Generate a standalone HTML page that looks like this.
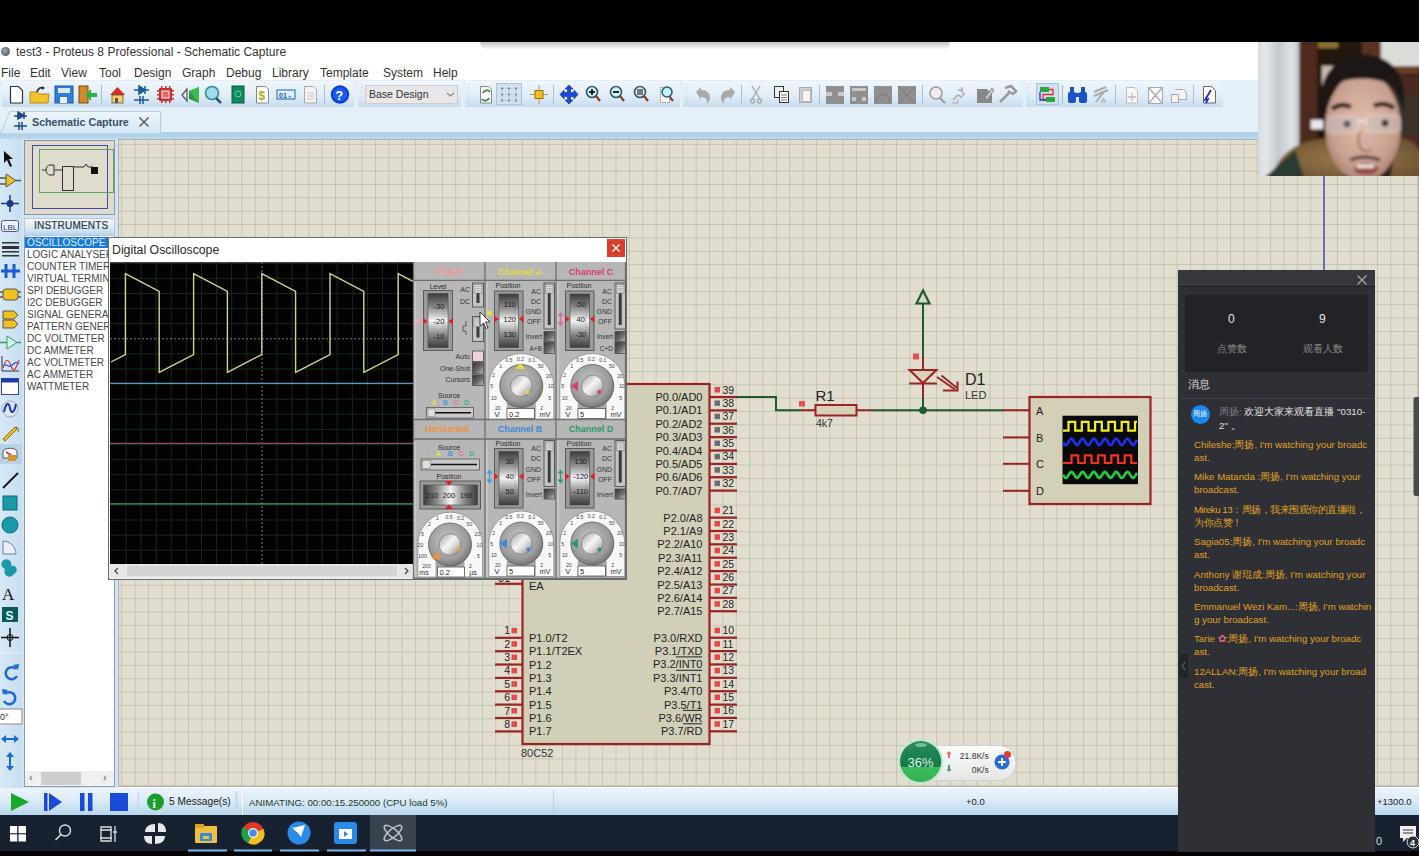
<!DOCTYPE html>
<html><head><meta charset="utf-8">
<style>
*{margin:0;padding:0;box-sizing:border-box}
html,body{width:1419px;height:856px;overflow:hidden;background:#fff;font-family:"Liberation Sans",sans-serif;position:relative}
.a{position:absolute}
.t{position:absolute;white-space:nowrap;line-height:1}
</style></head><body>
<!-- top black bar -->
<div class="a" style="left:0;top:0;width:1419px;height:42px;background:#000"></div>
<div class="a" style="left:480px;top:42px;width:470px;height:8px;background:linear-gradient(#9a9a9a,rgba(255,255,255,0));border-radius:0 0 40px 40px;opacity:.6"></div>

<!-- title -->
<div class="a" style="left:1px;top:47px;width:9px;height:9px;border-radius:50%;background:radial-gradient(circle at 40% 40%,#9aa,#445)"></div>
<div class="t" id="title" style="left:16px;top:46px;font-size:12px;color:#333">test3 - Proteus 8 Professional - Schematic Capture</div>

<!-- menu -->
<div class="t" style="left:1px;top:66.7px;font-size:12px;color:#333">File</div>
<div class="t" style="left:30px;top:66.7px;font-size:12px;color:#333">Edit</div>
<div class="t" style="left:61px;top:66.7px;font-size:12px;color:#333">View</div>
<div class="t" style="left:99px;top:66.7px;font-size:12px;color:#333">Tool</div>
<div class="t" style="left:134px;top:66.7px;font-size:12px;color:#333">Design</div>
<div class="t" style="left:182px;top:66.7px;font-size:12px;color:#333">Graph</div>
<div class="t" style="left:226px;top:66.7px;font-size:12px;color:#333">Debug</div>
<div class="t" style="left:272px;top:66.7px;font-size:12px;color:#333">Library</div>
<div class="t" style="left:320px;top:66.7px;font-size:12px;color:#333">Template</div>
<div class="t" style="left:383px;top:66.7px;font-size:12px;color:#333">System</div>
<div class="t" style="left:433px;top:66.7px;font-size:12px;color:#333">Help</div>

<!-- toolbar band + tab strip -->
<div class="a" style="left:0;top:80px;width:1258px;height:52px;background:#e5eff8"></div>
<div class="a" style="left:0;top:132px;width:1258px;height:7px;background:linear-gradient(#a9cde8,#bcd8ec)"></div>
<svg class="a" style="left:0;top:0" width="1258" height="140" viewBox="0 0 1258 140">
<defs>
<linearGradient id="grp" x1="0" y1="0" x2="0" y2="1"><stop offset="0" stop-color="#f0f6fb"/><stop offset=".6" stop-color="#dfecf7"/><stop offset="1" stop-color="#c6dcee"/></linearGradient>
<linearGradient id="tabg" x1="0" y1="0" x2="0" y2="1"><stop offset="0" stop-color="#eef5fb"/><stop offset="1" stop-color="#d2e5f4"/></linearGradient>
</defs>
<!-- groups -->
<rect x="2" y="81" width="352" height="26" fill="url(#grp)"/>
<rect x="358" y="81" width="103" height="26" fill="url(#grp)"/>
<rect x="465" y="81" width="215" height="26" fill="url(#grp)"/>
<rect x="683" y="81" width="340" height="26" fill="url(#grp)"/>
<rect x="1026" y="81" width="197" height="26" fill="url(#grp)"/>
<g stroke="#b9cfe0" stroke-width="1" stroke-dasharray="1 2">
<line x1="361.5" y1="84" x2="361.5" y2="104"/><line x1="468.5" y1="84" x2="468.5" y2="104"/><line x1="686.5" y1="84" x2="686.5" y2="104"/><line x1="1028.5" y1="84" x2="1028.5" y2="104"/>
</g>
<g stroke="#a9bfd2" stroke-width="1">
<line x1="101.5" y1="85" x2="101.5" y2="104"/><line x1="324.5" y1="85" x2="324.5" y2="104"/><line x1="553.5" y1="85" x2="553.5" y2="104"/>
<line x1="741.5" y1="85" x2="741.5" y2="104"/><line x1="819.5" y1="85" x2="819.5" y2="104"/><line x1="922.5" y1="85" x2="922.5" y2="104"/>
<line x1="1062.5" y1="85" x2="1062.5" y2="104"/><line x1="1115.5" y1="85" x2="1115.5" y2="104"/><line x1="1193.5" y1="85" x2="1193.5" y2="104"/>
</g>
<!-- 1 new -->
<path d="M10.5 86.5h8l4 4v12.5h-12z" fill="#fff" stroke="#333" stroke-width="1.2"/>
<!-- 2 open -->
<path d="M30 92h7l2 2h10l-1 9h-18z" fill="#f2c230" stroke="#b88a10" stroke-width="1"/>
<path d="M37 92c1-4 4-5 7-4" fill="none" stroke="#333" stroke-width="1.8"/><path d="M42 86l3 2-3 2z" fill="#333"/>
<!-- 3 save -->
<rect x="55" y="86" width="18" height="17" fill="#2f7fd8" stroke="#1a5aa8"/><rect x="58" y="88" width="12" height="5" fill="#dbe9f7"/><rect x="60" y="97" width="7" height="6" fill="#eef"/>
<!-- 4 import -->
<rect x="79" y="86" width="9" height="17" fill="#d08a2a" stroke="#7a4a10"/><path d="M97 93h-6v-4l-6 6 6 6v-4h6z" fill="#2fb040"/>
<!-- 6 home -->
<path d="M110 95l7.5-8 7.5 8z" fill="#d83020"/><rect x="112" y="95" width="11" height="8" fill="#f5d060" stroke="#555" stroke-width=".8"/><rect x="115" y="98" width="3" height="5" fill="#555"/>
<!-- 7 schematic -->
<g stroke="#1a5a9a" stroke-width="1.5" fill="#1a5a9a"><line x1="134" y1="90" x2="149" y2="90"/><path d="M139 86v8l6-4z"/><line x1="145" y1="86" x2="145" y2="94"/><line x1="134" y1="100" x2="149" y2="100"/><line x1="140" y1="96" x2="140" y2="104"/><line x1="143" y1="96" x2="143" y2="104"/></g>
<!-- 8 chip -->
<g fill="#c83030"><rect x="159" y="88" width="13" height="13" rx="1"/><rect x="157" y="90" width="17" height="1.5"/><rect x="157" y="94" width="17" height="1.5"/><rect x="157" y="98" width="17" height="1.5"/><rect x="161" y="86" width="1.5" height="17"/><rect x="165" y="86" width="1.5" height="17"/><rect x="169" y="86" width="1.5" height="17"/></g><rect x="162" y="91" width="7" height="7" fill="#f06060" stroke="#fff" stroke-width="1"/>
<!-- 9 sound -->
<path d="M182 95l5-6v12z" fill="none" stroke="#556" stroke-width="1.2"/><path d="M189 91l10-4v16l-10-4z" fill="#2a9a40"/><path d="M189 91l10-4v16z" fill="#3fba50"/>
<!-- 10 magnifier -->
<circle cx="212" cy="93" r="6.5" fill="#9fe0e8" stroke="#2a8a9a" stroke-width="1.5"/><line x1="216" y1="98" x2="221" y2="103" stroke="#2a5a6a" stroke-width="2.5"/>
<!-- 11 green book -->
<rect x="232" y="86" width="12" height="17" fill="#108a5a" stroke="#0a5a3a"/><circle cx="238" cy="94" r="3" fill="none" stroke="#5cd0a0"/>
<!-- 12 $ doc -->
<path d="M256.5 86.5h9l3 3v13.5h-12z" fill="#fff" stroke="#888"/><text x="258.5" y="100" font-size="12" font-weight="bold" fill="#b8a820" font-family="Liberation Sans">$</text>
<!-- 13 01 -->
<rect x="277" y="90" width="18" height="9" fill="#dfefff" stroke="#3a7ac0" stroke-width="1.2"/><text x="279" y="97.5" font-size="7" font-weight="bold" fill="#2a5aa0" font-family="Liberation Sans">01</text><text x="288" y="97.5" font-size="6" fill="#2a5aa0" font-family="Liberation Sans">»</text>
<!-- 14 gray doc -->
<path d="M304.5 86.5h9l3 3v13.5h-12z" fill="#f4f4f4" stroke="#aaa"/><g stroke="#c8c0c0"><line x1="307" y1="93" x2="314" y2="93"/><line x1="307" y1="96" x2="314" y2="96"/><line x1="307" y1="99" x2="314" y2="99"/></g>
<!-- 16 help -->
<circle cx="340" cy="94.5" r="9.2" fill="#0a3ad8"/><circle cx="340" cy="94.5" r="7.2" fill="#1a5af0"/><text x="335.2" y="100" font-size="13" font-weight="bold" fill="#fff" font-family="Liberation Sans">?</text>
<!-- dropdown -->
<rect x="365.5" y="85.5" width="92" height="18" fill="#e9e7ea" stroke="#c7cdd3"/>
<path d="M447 93l3.5 3 3.5-3" fill="none" stroke="#888" stroke-width="1.2"/>
<!-- group 3 -->
<path d="M480.5 86.5h8l3 3v13.5h-11z" fill="#fff" stroke="#888"/><path d="M483 93a4 4 0 0 1 7-1M489 98a4 4 0 0 1-7 1" fill="none" stroke="#2a9a40" stroke-width="2"/>
<rect x="496.5" y="83.5" width="25" height="21" fill="#cfe0ef" stroke="#a9c4dc"/>
<g fill="#555"><circle cx="502" cy="88.5" r="1"/><circle cx="509" cy="88.5" r="1"/><circle cx="516" cy="88.5" r="1"/><circle cx="502" cy="94.5" r="1"/><circle cx="509" cy="94.5" r="1"/><circle cx="516" cy="94.5" r="1"/><circle cx="502" cy="100.5" r="1"/><circle cx="509" cy="100.5" r="1"/><circle cx="516" cy="100.5" r="1"/></g>
<g stroke="#aab" stroke-width=".6" stroke-dasharray="1 1"><line x1="502" y1="88" x2="502" y2="101"/><line x1="509" y1="88" x2="509" y2="101"/><line x1="516" y1="88" x2="516" y2="101"/><line x1="501" y1="94.5" x2="517" y2="94.5"/><line x1="501" y1="88.5" x2="517" y2="88.5"/><line x1="501" y1="100.5" x2="517" y2="100.5"/></g>
<line x1="539" y1="85" x2="539" y2="104" stroke="#999" stroke-width="1"/><line x1="530" y1="94.5" x2="548" y2="94.5" stroke="#999" stroke-width="1"/><rect x="535" y="90.5" width="8" height="8" fill="#f0c020" stroke="#a07000"/>
<path d="M569 85l4 4h-2.5v3.5h3.5V90l4 4.5-4 4.5v-2.5h-3.5v3.5h2.5l-4 4-4-4h2.5v-3.5h-3.5v2.5l-4-4.5 4-4.5v2.5h3.5V89h-2.5z" fill="#1a4ad8" stroke="#0a2a90" stroke-width=".6"/>
<g fill="#d8f0f4" stroke="#2a5a6a" stroke-width="1.6"><circle cx="592" cy="92" r="5.5"/><circle cx="616" cy="92" r="5.5"/><circle cx="640" cy="92" r="5.5"/></g>
<g stroke="#8a3a20" stroke-width="2.2"><line x1="596" y1="96" x2="600" y2="101"/><line x1="620" y1="96" x2="624" y2="101"/><line x1="644" y1="96" x2="648" y2="101"/><line x1="669" y1="96" x2="673" y2="101"/></g>
<g stroke="#111" stroke-width="1.8"><line x1="589" y1="92" x2="595" y2="92"/><line x1="592" y1="89" x2="592" y2="95"/><line x1="613" y1="92" x2="619" y2="92"/></g>
<rect x="637" y="89" width="6" height="6" fill="#777"/>
<rect x="660.5" y="87.5" width="9" height="15" fill="#fff" stroke="#888" stroke-dasharray="1.5 1"/><circle cx="667" cy="92" r="5" fill="#bff0f4" stroke="#2a5a6a" stroke-width="1.5"/>
<!-- group 4 gray -->
<g fill="#a9a9a9">
<path d="M696 92l5-5v3c6 0 9 3 9 8 0 3-2 5-3 6 1-4-1-7-6-7v3z"/>
<path d="M735 92l-5-5v3c-6 0-9 3-9 8 0 3 2 5 3 6-1-4 1-7 6-7v3z"/>
</g>
<g stroke="#aaa" stroke-width="1.3" fill="none"><line x1="752" y1="86" x2="760" y2="99"/><line x1="760" y1="86" x2="752" y2="99"/><circle cx="752.5" cy="101" r="2"/><circle cx="759.5" cy="101" r="2"/></g>
<rect x="774.5" y="86.5" width="9" height="11" fill="#eee" stroke="#333"/><rect x="779.5" y="91.5" width="9" height="11" fill="#fff" stroke="#333"/><g stroke="#555" stroke-width=".8"><line x1="781" y1="95" x2="787" y2="95"/><line x1="781" y1="97.5" x2="787" y2="97.5"/><line x1="781" y1="100" x2="787" y2="100"/></g>
<rect x="799.5" y="87.5" width="12" height="15" fill="#ccc" stroke="#aaa"/><rect x="802.5" y="90.5" width="8" height="11" fill="#f4f4f4" stroke="#bbb"/>
<g fill="#8f8f8f"><rect x="826" y="86" width="18" height="18"/><rect x="850" y="86" width="18" height="18"/><rect x="874" y="86" width="18" height="18"/><rect x="898" y="86" width="18" height="18"/></g>
<g fill="#c8c8c8"><rect x="826" y="92" width="6" height="4"/><rect x="838" y="92" width="6" height="4"/><rect x="852" y="88" width="14" height="3"/><rect x="852" y="97" width="4" height="4"/><rect x="862" y="97" width="4" height="4"/></g>
<path d="M876 102c0-10 14-10 14 0" fill="none" stroke="#777" stroke-width="1"/><path d="M898 86l18 18M916 86l-18 18" stroke="#777" stroke-width="1"/>
<circle cx="936" cy="93" r="6" fill="#eee" stroke="#999" stroke-width="1.5"/><line x1="940" y1="98" x2="945" y2="103" stroke="#999" stroke-width="2"/>
<path d="M953 100l5-5 3 2 4-4M958 90h5M962 87v6" fill="none" stroke="#aaa" stroke-width="1.5"/><path d="M952 103h6v-4" fill="#ddd" stroke="#aaa"/>
<path d="M977 103v-14h10l5 5v9z" fill="#888"/><path d="M985 98l7-10 2 2-7 10z" fill="#ccc" stroke="#888"/>
<path d="M1000 102l9-9M1005 88l6-2 5 5-3 3-5-3" fill="none" stroke="#999" stroke-width="2.5"/>
<!-- group 5 -->
<rect x="1036.5" y="83.5" width="22" height="21" fill="#cfe0ef" stroke="#a9c4dc"/>
<rect x="1040" y="87" width="9" height="5" fill="#2aa840"/><rect x="1046" y="97" width="9" height="5" fill="#2aa840"/>
<path d="M1049 89.5h4v5h-10v5h3" fill="none" stroke="#d83030" stroke-width="1.3"/><path d="M1040 92v8h6" fill="none" stroke="#3030c8" stroke-width="1.3"/>
<g fill="#1a50c8"><rect x="1068" y="92" width="8" height="11" rx="2"/><rect x="1079" y="92" width="8" height="11" rx="2"/><rect x="1070" y="87" width="4" height="6"/><rect x="1081" y="87" width="4" height="6"/><rect x="1075" y="93" width="5" height="4"/></g>
<path d="M1094 92l12-5M1094 96l14-6M1096 102l8-10" stroke="#aaa" stroke-width="2" fill="none"/><text x="1101" y="103" font-size="7" fill="#999" font-family="Liberation Sans">A</text>
<path d="M1126.5 87.5h8l3 3v12.5h-11z" fill="#f8f8f8" stroke="#bbb"/><path d="M1132 93v8M1128 97h8" stroke="#bbb" stroke-width="1.3"/>
<path d="M1148.5 87.5h14v16h-14z" fill="#f8f8f8" stroke="#aaa"/><path d="M1148 87l15 17M1163 87l-15 17" stroke="#aaa" stroke-width="1.3"/>
<path d="M1171.5 94.5h7v8h-7zM1175.5 89.5h8l3 3v7h-8" fill="#f4f4f4" stroke="#aaa"/>
<path d="M1203.5 86.5h8l4 4v12.5h-12z" fill="#fff" stroke="#666"/><path d="M1211 90l-6 10 3-1-2 4" fill="none" stroke="#2a2ac0" stroke-width="1.8"/>
<!-- tab -->
<path d="M0 134 L10 111.5 H160.5 V134 Z" fill="url(#tabg)" stroke="#b3cde2" stroke-width="1"/>
<g stroke="#1a4a8a" stroke-width="1.5" fill="#1a4a8a"><line x1="14" y1="116" x2="27" y2="116"/><path d="M18 112v7l6-3.5z"/><line x1="24" y1="112" x2="24" y2="119"/><line x1="14" y1="126" x2="27" y2="126"/><line x1="19" y1="122" x2="19" y2="130"/><line x1="22" y1="122" x2="22" y2="130"/></g>
<path d="M139.5 117.5l9 9M148.5 117.5l-9 9" stroke="#555" stroke-width="1.4"/>
</svg>
<div class="t" style="left:369px;top:89px;font-size:10.5px;color:#333">Base Design</div>
<div class="t" style="left:32px;top:117px;font-size:10.7px;font-weight:bold;color:#3b5068">Schematic Capture</div>

<!--TOOLBAR-->

<!-- left toolbar -->
<div class="a" style="left:0;top:139px;width:22px;height:650px;background:linear-gradient(90deg,#d6e8f6,#c8def0)"></div>
<div class="a" style="left:22px;top:139px;width:96px;height:650px;background:#d2e5f4"></div>

<!-- canvas -->
<div class="a" id="canvas" style="left:118px;top:139px;width:1301px;height:648px;border:1px solid #a9b4b8;background-color:#e1ded0;
background-image:linear-gradient(90deg,rgba(150,145,120,.34) 1px,transparent 1px),linear-gradient(rgba(150,145,120,.34) 1px,transparent 1px);
background-size:13.37px 13.37px;background-position:-118px -129.7px"></div>

<!-- status bar -->
<div class="a" style="left:0;top:788px;width:1419px;height:27px;background:linear-gradient(#eef3fb,#d8eaf6 50%,#b8d6ec)"></div>
<!-- taskbar -->
<div class="a" style="left:0;top:815px;width:1419px;height:36px;background:#172130"></div>
<div class="a" style="left:0;top:851px;width:1419px;height:5px;background:#000"></div>

<!-- left vertical toolbar icons -->
<svg class="a" style="left:0;top:139px" width="24" height="650" viewBox="0 139 24 650">
<path d="M4 151l9 8h-4l3 7-2 1-3-7-3 3z" fill="#111"/>
<path d="M6 174v13l10-6.5z" fill="#f0c020" stroke="#555" stroke-width="1"/><path d="M0 178h6M0 184h6M16 180.5h5" stroke="#555" stroke-width="1.3"/>
<path d="M10 195v17M1 203.5h18" stroke="#1a3a8a" stroke-width="1.5"/><circle cx="10" cy="203.5" r="3.5" fill="#1a3a8a"/>
<rect x="1.5" y="220.5" width="17" height="11" rx="2" fill="#eef" stroke="#4a5a8a"/><text x="3" y="229.5" font-size="8" fill="#2a3a6a" font-family="Liberation Sans">LBL</text>
<g fill="#333"><rect x="2" y="242" width="17" height="1.5"/><rect x="2" y="246" width="17" height="3"/><rect x="2" y="251" width="17" height="1.5"/><rect x="2" y="255" width="17" height="1.5"/></g>
<path d="M1 271h19M6 264v14M14 264v14" stroke="#1a5ad8" stroke-width="3"/>
<rect x="3" y="289" width="15" height="11" rx="3" fill="#f0c020" stroke="#555"/><path d="M0 292h3M0 297h3M18 292h3M18 297h3" stroke="#555" stroke-width="1.3"/>
<path d="M3 311h11l4 4-4 4H3z" fill="#f0c020" stroke="#555"/><path d="M3 320h11l4 4-4 4H3z" fill="#f0c020" stroke="#555"/>
<path d="M7 336v13l10-6.5z" fill="#cfe" stroke="#3a9a5a" stroke-width="1"/><path d="M0 342.5h7M17 342.5h4" stroke="#3a9a5a" stroke-width="1.3"/>
<path d="M2 356v15h17" fill="none" stroke="#333"/><path d="M3 368c3-10 5-10 8-2s5 2 8-6" fill="none" stroke="#d83030" stroke-width="1.2"/><path d="M3 366c3-4 5 2 8 0s5-6 8-2" fill="none" stroke="#2a5ad8" stroke-width="1.2"/>
<rect x="1.5" y="378.5" width="17" height="16" fill="#fff" stroke="#3a4a7a"/><rect x="1.5" y="378.5" width="17" height="4" fill="#1a3ab0"/>
<circle cx="10" cy="409" r="8" fill="#dfe6f0" stroke="#aab"/><path d="M4 412c2-10 5-10 6-4s4 6 6-4" fill="none" stroke="#1a3ab8" stroke-width="2"/>
<path d="M3 439l12-12 2 2-12 12z" fill="#f0c020" stroke="#8a6a10"/><path d="M15 428c3-2 4 1 3 4" fill="none" stroke="#8a6a10"/>
<rect x="0" y="444" width="22" height="20" fill="#b8d2e8"/><path d="M3 458v-6c0-5 14-5 14 0v6z" fill="#fff" stroke="#555"/><path d="M6 452l5 3" stroke="#d83030" stroke-width="1.5"/><rect x="8" y="455" width="8" height="6" fill="#d89030"/>
<path d="M3 488l15-15" stroke="#111" stroke-width="1.8"/>
<rect x="3" y="496" width="14" height="14" fill="#1a9aa8" stroke="#0a6a78"/>
<circle cx="10" cy="525" r="8" fill="#1a9aa8" stroke="#0a6a78"/>
<path d="M3 541v13h13c0-7-6-13-13-13z" fill="#eef0f8" stroke="#6a7aa8"/>
<path d="M5 569a5 5 0 1 1 6-3a4 4 0 1 1 3 8a5 5 0 0 1-9-5z" fill="#1a9aa8"/>
<text x="2" y="600" font-size="17" fill="#111" font-family="Liberation Serif">A</text>
<rect x="2" y="607" width="16" height="15" fill="#0a5a5a"/><text x="5.5" y="619.5" font-size="12" font-weight="bold" fill="#dff" font-family="Liberation Sans">S</text>
<path d="M10 628v19M1 637.5h18" stroke="#111" stroke-width="1.5"/><circle cx="10" cy="637.5" r="3" fill="none" stroke="#111"/>
<line x1="0" y1="653" x2="22" y2="653" stroke="#fff" stroke-dasharray="1 1"/>
<path d="M16 669a6 6 0 1 0 1 7" fill="none" stroke="#1a6ad8" stroke-width="2.5"/><path d="M13 665l5 5 1-6z" fill="#1a6ad8"/>
<path d="M5 694a6 6 0 1 1-1 7" fill="none" stroke="#1a6ad8" stroke-width="2.5"/><path d="M8 690l-5 5-1-6z" fill="#1a6ad8"/>
<rect x="-1" y="709" width="23" height="15" fill="#fff" stroke="#888"/><text x="0" y="720" font-size="9" fill="#333" font-family="Liberation Sans">0°</text>
<path d="M1 739l5-4v3h8v-3l5 4-5 4v-3H6v3z" fill="#1a6ad8"/>
<path d="M10 752l4 5h-3v9h3l-4 5-4-5h3v-9H6z" fill="#1a6ad8"/>
</svg>
<!-- left panel -->
<div class="a" style="left:24px;top:140px;width:91px;height:75px;background:#dfdccd;border:1px solid #8a96a0"></div>
<div class="a" style="left:32px;top:145px;width:76px;height:64px;border:1.5px solid #4848a8"></div>
<div class="a" style="left:39px;top:149px;width:75px;height:44px;border:1.5px solid #58a858"></div>
<svg class="a" style="left:24px;top:140px" width="91" height="75" viewBox="24 140 91 75">
<path d="M42 170h4M46 170c0-3 2-5 4-5h4v10h-4c-2 0-4-2-4-5M54 170h8" fill="none" stroke="#333" stroke-width="1"/>
<rect x="62.5" y="166.5" width="11" height="24" fill="none" stroke="#333" stroke-width="1"/>
<path d="M74 167h10l2-3 2 3h5" fill="none" stroke="#333" stroke-width="1"/>
<rect x="91" y="167" width="7" height="7" fill="#111"/>
</svg>
<div class="a" style="left:24px;top:218px;width:91px;height:18px;background:linear-gradient(#f4f8fc,#dce9f4 55%,#b4d4ee);border:1px solid #b8c8d8"></div>
<div class="t" style="left:34px;top:221px;font-size:10px;color:#2e3844;letter-spacing:.2px;-webkit-text-stroke:.2px #2e3844">INSTRUMENTS</div>
<div class="a" style="left:24px;top:236px;width:91px;height:551px;background:#fff;border:1px solid #8a9cae;border-top:none"></div>
<div class="a" style="left:25px;top:237px;width:83px;height:11px;background:#1a7ad8"></div>
<div class="a" id="instlist" style="left:27px;top:237px;font-size:10px;line-height:12px;color:#484848;width:84px;overflow:hidden;white-space:nowrap">
<div style="color:#dff0ff">OSCILLOSCOPE</div><div>LOGIC ANALYSER</div><div>COUNTER TIMER</div><div>VIRTUAL TERMINAL</div><div>SPI DEBUGGER</div><div>I2C DEBUGGER</div><div>SIGNAL GENERATOR</div><div>PATTERN GENERATOR</div><div>DC VOLTMETER</div><div>DC AMMETER</div><div>AC VOLTMETER</div><div>AC AMMETER</div><div>WATTMETER</div>
</div>
<div class="a" style="left:25px;top:771px;width:89px;height:15px;background:#f0f0f0"></div>
<div class="a" style="left:41px;top:772px;width:40px;height:13px;background:#cdcdcd"></div>
<div class="t" style="left:29px;top:772px;font-size:11px;color:#555">&lsaquo;</div>
<div class="t" style="left:103px;top:772px;font-size:11px;color:#555">&rsaquo;</div>

<!--LEFT-->
<!-- status bar icons -->
<svg class="a" style="left:0;top:788px" width="1419" height="68" viewBox="0 788 1419 68">
<path d="M11 793v18l18-9z" fill="#1aa82a"/>
<rect x="44" y="793" width="3.5" height="18" fill="#1a4ad8"/><path d="M49 793v18l13-9z" fill="#1a4ad8"/>
<rect x="80" y="793" width="4.5" height="18" fill="#1a4ad8"/><rect x="88" y="793" width="4.5" height="18" fill="#1a4ad8"/>
<rect x="110" y="793" width="18" height="18" fill="#1a4ad8"/>
<line x1="138.5" y1="791" x2="138.5" y2="813" stroke="#c8d8e8"/>
<circle cx="155.5" cy="802" r="8.5" fill="#1aa02a"/><text x="152.5" y="807.5" font-size="12" font-weight="bold" fill="#fff" font-family="Liberation Serif">i</text>
<line x1="236.5" y1="791" x2="236.5" y2="814" stroke="#c8d8e8" stroke-width="2"/><line x1="242.5" y1="791" x2="242.5" y2="814" stroke="#fff"/>
<line x1="553.5" y1="790" x2="553.5" y2="814" stroke="#bbb" stroke-dasharray="1 1"/>
<!-- taskbar -->
<g fill="#fff"><rect x="10" y="826" width="7.2" height="7.2"/><rect x="18.5" y="826" width="7.5" height="7.2"/><rect x="10" y="834.3" width="7.2" height="7.2"/><rect x="18.5" y="834.3" width="7.5" height="7.2"/></g>
<circle cx="65" cy="830.5" r="5.5" fill="none" stroke="#ddd" stroke-width="1.4"/><line x1="61" y1="834.5" x2="55.5" y2="840" stroke="#ddd" stroke-width="1.6"/>
<path d="M101 827h10v14h-10zM100 830h12M100 838h12M115 826v16M113 832h4" fill="none" stroke="#ddd" stroke-width="1.3"/>
<g fill="#e8e8e8"><path d="M155 824c-6 0-10 3-10 8h10z"/><path d="M166 832c0-6-3-9-8-9v9z"/><path d="M155 844c6 0 10-3 10-8h-10z"/><path d="M144 836c0 5 3 8 8 8v-8z"/></g>
<rect x="195" y="826" width="22" height="17" rx="1" fill="#f0c040"/><rect x="195" y="824" width="9" height="4" fill="#e0a020"/><rect x="200" y="833" width="12" height="8" fill="#3a8ad8"/><rect x="203" y="836" width="6" height="3" fill="#f0c040"/>
<rect x="188" y="849.5" width="39" height="2" fill="#78b8f0"/>
<circle cx="253" cy="833" r="11" fill="#db3a2a"/><path d="M253 833L263.5 829A11 11 0 0 1 248 843z" fill="#f4c020"/><path d="M253 833L248 843A11 11 0 0 1 243 827z" fill="#1ea048"/><circle cx="253" cy="833" r="5" fill="#fff"/><circle cx="253" cy="833" r="3.8" fill="#4a8ae8"/>
<rect x="234" y="849.5" width="38" height="2" fill="#78b8f0"/>
<circle cx="299" cy="833" r="11.5" fill="#2a8ae8"/><path d="M292 828l13-3-4 12-3-4z" fill="#fff"/>
<rect x="280" y="849.5" width="39" height="2" fill="#78b8f0"/>
<rect x="334" y="822" width="23" height="22" rx="3" fill="#2a8ae8"/><rect x="339" y="829" width="13" height="10" fill="#fff"/><path d="M344 831v6l4-3z" fill="#2a8ae8"/>
<rect x="327" y="849.5" width="39" height="2" fill="#78b8f0"/>
<rect x="370" y="815" width="46" height="36" fill="#3a4250"/>
<g fill="none" stroke="#b8c0c8" stroke-width="1.5"><ellipse cx="393" cy="833" rx="11" ry="4" transform="rotate(40 393 833)"/><ellipse cx="393" cy="833" rx="11" ry="4" transform="rotate(-40 393 833)"/></g>
<rect x="370" y="849.5" width="46" height="2" fill="#78b8f0"/>
<path d="M1400 826h16v12h-9l-4 4v-4h-3z" fill="#eee"/><path d="M1403 830h10M1403 833h10" stroke="#333"/>
<circle cx="1413" cy="842" r="6" fill="#2a2e36" stroke="#ddd"/><text x="1410" y="846" font-size="9" fill="#fff" font-weight="bold" font-family="Liberation Sans">4</text>
</svg>
<div class="t" style="left:169px;top:797px;font-size:10.2px;color:#222">5 Message(s)</div>
<div class="t" style="left:249px;top:798px;font-size:9.7px;color:#1a3a2a">ANIMATING: 00:00:15.250000 (CPU load 5%)</div>
<div class="t" style="left:966px;top:797px;font-size:9.5px;color:#222">+0.0</div>
<div class="t" style="left:1377px;top:797px;font-size:9.5px;color:#222">+1300.0</div>
<div class="t" style="left:1376px;top:836px;font-size:11px;color:#ddd">0</div>

<!--BOTTOM-->
<!--CIRCUIT-->
<svg class="a" style="left:118px;top:139px" width="1301" height="648" viewBox="118 139 1301 648" font-family="Liberation Sans">
<rect x="522.5" y="384" width="187" height="360" fill="#d2cfb8" stroke="#9a2424" stroke-width="2.2"/>
<line x1="709" y1="397.0" x2="737" y2="397.0" stroke="#9a2424" stroke-width="2.2"/>
<text x="702.5" y="401.0" font-size="11" fill="#222" text-anchor="end">P0.0/AD0</text>
<text x="722.5" y="393.5" font-size="10.5" fill="#222" text-anchor="start">39</text>
<rect x="714.5" y="387.0" width="5.5" height="5.5" fill="#e84848"/>
<line x1="709" y1="410.4" x2="737" y2="410.4" stroke="#9a2424" stroke-width="2.2"/>
<text x="702.5" y="414.4" font-size="11" fill="#222" text-anchor="end">P0.1/AD1</text>
<text x="722.5" y="406.9" font-size="10.5" fill="#222" text-anchor="start">38</text>
<rect x="714.5" y="400.4" width="5.5" height="5.5" fill="#6a6e6e"/>
<line x1="709" y1="423.7" x2="737" y2="423.7" stroke="#9a2424" stroke-width="2.2"/>
<text x="702.5" y="427.7" font-size="11" fill="#222" text-anchor="end">P0.2/AD2</text>
<text x="722.5" y="420.2" font-size="10.5" fill="#222" text-anchor="start">37</text>
<rect x="714.5" y="413.7" width="5.5" height="5.5" fill="#6a6e6e"/>
<line x1="709" y1="437.1" x2="737" y2="437.1" stroke="#9a2424" stroke-width="2.2"/>
<text x="702.5" y="441.1" font-size="11" fill="#222" text-anchor="end">P0.3/AD3</text>
<text x="722.5" y="433.6" font-size="10.5" fill="#222" text-anchor="start">36</text>
<rect x="714.5" y="427.1" width="5.5" height="5.5" fill="#6a6e6e"/>
<line x1="709" y1="450.5" x2="737" y2="450.5" stroke="#9a2424" stroke-width="2.2"/>
<text x="702.5" y="454.5" font-size="11" fill="#222" text-anchor="end">P0.4/AD4</text>
<text x="722.5" y="447.0" font-size="10.5" fill="#222" text-anchor="start">35</text>
<rect x="714.5" y="440.5" width="5.5" height="5.5" fill="#6a6e6e"/>
<line x1="709" y1="463.9" x2="737" y2="463.9" stroke="#9a2424" stroke-width="2.2"/>
<text x="702.5" y="467.9" font-size="11" fill="#222" text-anchor="end">P0.5/AD5</text>
<text x="722.5" y="460.4" font-size="10.5" fill="#222" text-anchor="start">34</text>
<rect x="714.5" y="453.9" width="5.5" height="5.5" fill="#6a6e6e"/>
<line x1="709" y1="477.2" x2="737" y2="477.2" stroke="#9a2424" stroke-width="2.2"/>
<text x="702.5" y="481.2" font-size="11" fill="#222" text-anchor="end">P0.6/AD6</text>
<text x="722.5" y="473.7" font-size="10.5" fill="#222" text-anchor="start">33</text>
<rect x="714.5" y="467.2" width="5.5" height="5.5" fill="#6a6e6e"/>
<line x1="709" y1="490.6" x2="737" y2="490.6" stroke="#9a2424" stroke-width="2.2"/>
<text x="702.5" y="494.6" font-size="11" fill="#222" text-anchor="end">P0.7/AD7</text>
<text x="722.5" y="487.1" font-size="10.5" fill="#222" text-anchor="start">32</text>
<rect x="714.5" y="480.6" width="5.5" height="5.5" fill="#6a6e6e"/>
<line x1="709" y1="517.6" x2="737" y2="517.6" stroke="#9a2424" stroke-width="2.2"/>
<text x="702.5" y="521.6" font-size="11" fill="#222" text-anchor="end">P2.0/A8</text>
<text x="722.5" y="514.1" font-size="10.5" fill="#222" text-anchor="start">21</text>
<rect x="714.5" y="507.6" width="5.5" height="5.5" fill="#e84848"/>
<line x1="709" y1="531.0" x2="737" y2="531.0" stroke="#9a2424" stroke-width="2.2"/>
<text x="702.5" y="535.0" font-size="11" fill="#222" text-anchor="end">P2.1/A9</text>
<text x="722.5" y="527.5" font-size="10.5" fill="#222" text-anchor="start">22</text>
<rect x="714.5" y="521.0" width="5.5" height="5.5" fill="#e84848"/>
<line x1="709" y1="544.3" x2="737" y2="544.3" stroke="#9a2424" stroke-width="2.2"/>
<text x="702.5" y="548.3" font-size="11" fill="#222" text-anchor="end">P2.2/A10</text>
<text x="722.5" y="540.8" font-size="10.5" fill="#222" text-anchor="start">23</text>
<rect x="714.5" y="534.3" width="5.5" height="5.5" fill="#e84848"/>
<line x1="709" y1="557.7" x2="737" y2="557.7" stroke="#9a2424" stroke-width="2.2"/>
<text x="702.5" y="561.7" font-size="11" fill="#222" text-anchor="end">P2.3/A11</text>
<text x="722.5" y="554.2" font-size="10.5" fill="#222" text-anchor="start">24</text>
<rect x="714.5" y="547.7" width="5.5" height="5.5" fill="#e84848"/>
<line x1="709" y1="571.1" x2="737" y2="571.1" stroke="#9a2424" stroke-width="2.2"/>
<text x="702.5" y="575.1" font-size="11" fill="#222" text-anchor="end">P2.4/A12</text>
<text x="722.5" y="567.6" font-size="10.5" fill="#222" text-anchor="start">25</text>
<rect x="714.5" y="561.1" width="5.5" height="5.5" fill="#e84848"/>
<line x1="709" y1="584.5" x2="737" y2="584.5" stroke="#9a2424" stroke-width="2.2"/>
<text x="702.5" y="588.5" font-size="11" fill="#222" text-anchor="end">P2.5/A13</text>
<text x="722.5" y="581.0" font-size="10.5" fill="#222" text-anchor="start">26</text>
<rect x="714.5" y="574.5" width="5.5" height="5.5" fill="#e84848"/>
<line x1="709" y1="597.8" x2="737" y2="597.8" stroke="#9a2424" stroke-width="2.2"/>
<text x="702.5" y="601.8" font-size="11" fill="#222" text-anchor="end">P2.6/A14</text>
<text x="722.5" y="594.3" font-size="10.5" fill="#222" text-anchor="start">27</text>
<rect x="714.5" y="587.8" width="5.5" height="5.5" fill="#e84848"/>
<line x1="709" y1="611.2" x2="737" y2="611.2" stroke="#9a2424" stroke-width="2.2"/>
<text x="702.5" y="615.2" font-size="11" fill="#222" text-anchor="end">P2.7/A15</text>
<text x="722.5" y="607.7" font-size="10.5" fill="#222" text-anchor="start">28</text>
<rect x="714.5" y="601.2" width="5.5" height="5.5" fill="#e84848"/>
<line x1="709" y1="637.7" x2="737" y2="637.7" stroke="#9a2424" stroke-width="2.2"/>
<text x="702.5" y="641.7" font-size="11" fill="#222" text-anchor="end">P3.0/RXD</text>
<text x="722.5" y="634.2" font-size="10.5" fill="#222" text-anchor="start">10</text>
<rect x="714.5" y="627.7" width="5.5" height="5.5" fill="#e84848"/>
<line x1="709" y1="651.1" x2="737" y2="651.1" stroke="#9a2424" stroke-width="2.2"/>
<text x="702.5" y="655.1" font-size="11" fill="#222" text-anchor="end">P3.1/TXD</text>
<text x="722.5" y="647.6" font-size="10.5" fill="#222" text-anchor="start">11</text>
<rect x="714.5" y="641.1" width="5.5" height="5.5" fill="#e84848"/>
<line x1="709" y1="664.4" x2="737" y2="664.4" stroke="#9a2424" stroke-width="2.2"/>
<text x="702.5" y="668.4" font-size="11" fill="#222" text-anchor="end">P3.2/INT0</text>
<text x="722.5" y="660.9" font-size="10.5" fill="#222" text-anchor="start">12</text>
<rect x="714.5" y="654.4" width="5.5" height="5.5" fill="#e84848"/>
<line x1="709" y1="677.8" x2="737" y2="677.8" stroke="#9a2424" stroke-width="2.2"/>
<text x="702.5" y="681.8" font-size="11" fill="#222" text-anchor="end">P3.3/INT1</text>
<text x="722.5" y="674.3" font-size="10.5" fill="#222" text-anchor="start">13</text>
<rect x="714.5" y="667.8" width="5.5" height="5.5" fill="#e84848"/>
<line x1="709" y1="691.2" x2="737" y2="691.2" stroke="#9a2424" stroke-width="2.2"/>
<text x="702.5" y="695.2" font-size="11" fill="#222" text-anchor="end">P3.4/T0</text>
<text x="722.5" y="687.7" font-size="10.5" fill="#222" text-anchor="start">14</text>
<rect x="714.5" y="681.2" width="5.5" height="5.5" fill="#e84848"/>
<line x1="709" y1="704.6" x2="737" y2="704.6" stroke="#9a2424" stroke-width="2.2"/>
<text x="702.5" y="708.6" font-size="11" fill="#222" text-anchor="end">P3.5/T1</text>
<text x="722.5" y="701.1" font-size="10.5" fill="#222" text-anchor="start">15</text>
<rect x="714.5" y="694.6" width="5.5" height="5.5" fill="#e84848"/>
<line x1="709" y1="717.9" x2="737" y2="717.9" stroke="#9a2424" stroke-width="2.2"/>
<text x="702.5" y="721.9" font-size="11" fill="#222" text-anchor="end">P3.6/WR</text>
<text x="722.5" y="714.4" font-size="10.5" fill="#222" text-anchor="start">16</text>
<rect x="714.5" y="707.9" width="5.5" height="5.5" fill="#e84848"/>
<line x1="709" y1="731.3" x2="737" y2="731.3" stroke="#9a2424" stroke-width="2.2"/>
<text x="702.5" y="735.3" font-size="11" fill="#222" text-anchor="end">P3.7/RD</text>
<text x="722.5" y="727.8" font-size="10.5" fill="#222" text-anchor="start">17</text>
<rect x="714.5" y="721.3" width="5.5" height="5.5" fill="#e84848"/>
<line x1="676" y1="656.9" x2="702" y2="656.9" stroke="#222" stroke-width="1"/>
<line x1="676" y1="670.3" x2="702" y2="670.3" stroke="#222" stroke-width="1"/>
<line x1="683" y1="710.4" x2="702" y2="710.4" stroke="#222" stroke-width="1"/>
<line x1="683" y1="723.8" x2="702" y2="723.8" stroke="#222" stroke-width="1"/>
<line x1="495" y1="637.8" x2="523" y2="637.8" stroke="#9a2424" stroke-width="2.2"/>
<text x="529" y="641.8" font-size="11" fill="#222" text-anchor="start">P1.0/T2</text>
<text x="510" y="634.3" font-size="10.5" fill="#222" text-anchor="end">1</text>
<rect x="511.5" y="627.8" width="5.5" height="5.5" fill="#e84848"/>
<line x1="495" y1="651.2" x2="523" y2="651.2" stroke="#9a2424" stroke-width="2.2"/>
<text x="529" y="655.2" font-size="11" fill="#222" text-anchor="start">P1.1/T2EX</text>
<text x="510" y="647.7" font-size="10.5" fill="#222" text-anchor="end">2</text>
<rect x="511.5" y="641.2" width="5.5" height="5.5" fill="#e84848"/>
<line x1="495" y1="664.5" x2="523" y2="664.5" stroke="#9a2424" stroke-width="2.2"/>
<text x="529" y="668.5" font-size="11" fill="#222" text-anchor="start">P1.2</text>
<text x="510" y="661.0" font-size="10.5" fill="#222" text-anchor="end">3</text>
<rect x="511.5" y="654.5" width="5.5" height="5.5" fill="#e84848"/>
<line x1="495" y1="677.9" x2="523" y2="677.9" stroke="#9a2424" stroke-width="2.2"/>
<text x="529" y="681.9" font-size="11" fill="#222" text-anchor="start">P1.3</text>
<text x="510" y="674.4" font-size="10.5" fill="#222" text-anchor="end">4</text>
<rect x="511.5" y="667.9" width="5.5" height="5.5" fill="#e84848"/>
<line x1="495" y1="691.3" x2="523" y2="691.3" stroke="#9a2424" stroke-width="2.2"/>
<text x="529" y="695.3" font-size="11" fill="#222" text-anchor="start">P1.4</text>
<text x="510" y="687.8" font-size="10.5" fill="#222" text-anchor="end">5</text>
<rect x="511.5" y="681.3" width="5.5" height="5.5" fill="#e84848"/>
<line x1="495" y1="704.6" x2="523" y2="704.6" stroke="#9a2424" stroke-width="2.2"/>
<text x="529" y="708.6" font-size="11" fill="#222" text-anchor="start">P1.5</text>
<text x="510" y="701.1" font-size="10.5" fill="#222" text-anchor="end">6</text>
<rect x="511.5" y="694.6" width="5.5" height="5.5" fill="#e84848"/>
<line x1="495" y1="718.0" x2="523" y2="718.0" stroke="#9a2424" stroke-width="2.2"/>
<text x="529" y="722.0" font-size="11" fill="#222" text-anchor="start">P1.6</text>
<text x="510" y="714.5" font-size="10.5" fill="#222" text-anchor="end">7</text>
<rect x="511.5" y="708.0" width="5.5" height="5.5" fill="#e84848"/>
<line x1="495" y1="731.4" x2="523" y2="731.4" stroke="#9a2424" stroke-width="2.2"/>
<text x="529" y="735.4" font-size="11" fill="#222" text-anchor="start">P1.7</text>
<text x="510" y="727.9" font-size="10.5" fill="#222" text-anchor="end">8</text>
<rect x="511.5" y="721.4" width="5.5" height="5.5" fill="#e84848"/>
<line x1="495" y1="583.8" x2="523" y2="583.8" stroke="#9a2424" stroke-width="2.2"/>
<text x="510" y="581.5" font-size="10.5" fill="#222" text-anchor="end">31</text>
<text x="529" y="590" font-size="11" fill="#222" text-anchor="start">EA</text>
<text x="521" y="757" font-size="11" fill="#333" text-anchor="start">80C52</text>
<path d="M737 397H776V410.2H801" fill="none" stroke="#1e5a2a" stroke-width="2"/>
<line x1="801" y1="410.2" x2="815" y2="410.2" stroke="#9a2424" stroke-width="2"/>
<rect x="815.5" y="405" width="41" height="10.5" fill="#d8d2b8" stroke="#9a2424" stroke-width="2"/>
<line x1="857" y1="410.2" x2="871" y2="410.2" stroke="#9a2424" stroke-width="2"/>
<path d="M871 410.2H1003" fill="none" stroke="#1e5a2a" stroke-width="2"/>
<rect x="799" y="401" width="6" height="5.5" fill="#e85050"/>
<text x="815.5" y="400.5" font-size="15" fill="#222" text-anchor="start">R1</text>
<text x="816" y="427" font-size="10.5" fill="#333" text-anchor="start">4k7</text>
<path d="M923 304V357" stroke="#1e5a2a" stroke-width="2"/>
<path d="M916.5 303.5h13L923 290.5z" fill="none" stroke="#1e5a2a" stroke-width="2.2"/>
<path d="M923 357V370" stroke="#9a2424" stroke-width="2"/>
<path d="M909.5 370h27L923 383z" fill="#d8d2b8" stroke="#9a2424" stroke-width="2"/>
<line x1="909" y1="383.5" x2="937" y2="383.5" stroke="#9a2424" stroke-width="2"/>
<path d="M923 384V398" stroke="#9a2424" stroke-width="2"/>
<path d="M923 398V410" stroke="#1e5a2a" stroke-width="2"/>
<circle cx="923" cy="410.2" r="3.8" fill="#1e5a2a"/>
<path d="M937 377L955 389.5M941.5 375.5L957 388" stroke="#9a2424" stroke-width="1.8" fill="none"/>
<path d="M943 390.5H957.5V381.5" fill="none" stroke="#9a2424" stroke-width="2"/>
<rect x="913" y="353.5" width="6" height="6" fill="#e85050"/>
<text x="965" y="384.5" font-size="16" fill="#222" text-anchor="start">D1</text>
<text x="965" y="399" font-size="11" fill="#333" text-anchor="start">LED</text>
<path d="M1003 410.2H1029" stroke="#9a2424" stroke-width="2"/>
<line x1="1003" y1="437.4" x2="1029" y2="437.4" stroke="#9a2424" stroke-width="2"/>
<line x1="1003" y1="463.8" x2="1029" y2="463.8" stroke="#9a2424" stroke-width="2"/>
<line x1="1003" y1="490.8" x2="1029" y2="490.8" stroke="#9a2424" stroke-width="2"/>
<rect x="1029.5" y="397" width="121" height="107" fill="#d4d0b8" stroke="#9a2424" stroke-width="2.2"/>
<text x="1036" y="414.7" font-size="11" fill="#222" text-anchor="start">A</text>
<text x="1036" y="441.9" font-size="11" fill="#222" text-anchor="start">B</text>
<text x="1036" y="468.3" font-size="11" fill="#222" text-anchor="start">C</text>
<text x="1036" y="495.3" font-size="11" fill="#222" text-anchor="start">D</text>
<rect x="1062.5" y="415.7" width="75.5" height="68.5" fill="#0a0a0a"/>
<path d="M1063 430.7H1068.5V421.8H1075.2V430.7H1081.8V421.8H1088.5V430.7H1095.1V421.8H1101.8V430.7H1108.4V421.8H1115.0V430.7H1121.7V421.8H1128.3V430.7H1135.0V421.8H1137.0" fill="none" stroke="#f0f020" stroke-width="2.2"/>
<polyline points="1063.0,441.9 1063.5,442.8 1064.0,443.6 1064.5,444.3 1065.0,444.8 1065.5,445.1 1066.0,445.1 1066.5,444.9 1067.0,444.4 1067.5,443.8 1068.0,443.0 1068.5,442.1 1069.0,441.2 1069.5,440.4 1070.0,439.6 1070.5,439.1 1071.0,438.8 1071.5,438.7 1072.0,438.9 1072.5,439.3 1073.0,439.9 1073.5,440.7 1074.0,441.5 1074.5,442.4 1075.0,443.3 1075.5,444.0 1076.0,444.6 1076.5,445.0 1077.0,445.1 1077.5,445.0 1078.0,444.6 1078.5,444.0 1079.0,443.3 1079.5,442.4 1080.0,441.5 1080.5,440.7 1081.0,439.9 1081.5,439.3 1082.0,438.9 1082.5,438.7 1083.0,438.8 1083.5,439.1 1084.0,439.6 1084.5,440.4 1085.0,441.2 1085.5,442.1 1086.0,443.0 1086.5,443.8 1087.0,444.4 1087.5,444.9 1088.0,445.1 1088.5,445.1 1089.0,444.8 1089.5,444.3 1090.0,443.6 1090.5,442.8 1091.0,441.9 1091.5,441.0 1092.0,440.2 1092.5,439.5 1093.0,439.0 1093.5,438.7 1094.0,438.7 1094.5,438.9 1095.0,439.4 1095.5,440.0 1096.0,440.8 1096.5,441.7 1097.0,442.6 1097.5,443.4 1098.0,444.2 1098.5,444.7 1099.0,445.0 1099.5,445.1 1100.0,444.9 1100.5,444.5 1101.0,443.9 1101.5,443.1 1102.0,442.3 1102.5,441.4 1103.0,440.5 1103.5,439.8 1104.0,439.2 1104.5,438.8 1105.0,438.7 1105.5,438.8 1106.0,439.2 1106.5,439.8 1107.0,440.5 1107.5,441.4 1108.0,442.3 1108.5,443.1 1109.0,443.9 1109.5,444.5 1110.0,444.9 1110.5,445.1 1111.0,445.0 1111.5,444.7 1112.0,444.2 1112.5,443.4 1113.0,442.6 1113.5,441.7 1114.0,440.8 1114.5,440.0 1115.0,439.4 1115.5,438.9 1116.0,438.7 1116.5,438.7 1117.0,439.0 1117.5,439.5 1118.0,440.2 1118.5,441.0 1119.0,441.9 1119.5,442.8 1120.0,443.6 1120.5,444.3 1121.0,444.8 1121.5,445.1 1122.0,445.1 1122.5,444.9 1123.0,444.4 1123.5,443.8 1124.0,443.0 1124.5,442.1 1125.0,441.2 1125.5,440.4 1126.0,439.6 1126.5,439.1 1127.0,438.8 1127.5,438.7 1128.0,438.9 1128.5,439.3 1129.0,439.9 1129.5,440.7 1130.0,441.5 1130.5,442.4 1131.0,443.3 1131.5,444.0 1132.0,444.6 1132.5,445.0 1133.0,445.1 1133.5,445.0 1134.0,444.6 1134.5,444.0 1135.0,443.3 1135.5,442.4 1136.0,441.5 1136.5,440.7 1137.0,439.9" fill="none" stroke="#2030f0" stroke-width="2.6"/>
<path d="M1063 463H1071.5V455.3H1078.2V463H1084.8V455.3H1091.5V463H1098.1V455.3H1104.8V463H1111.4V455.3H1118.0V463H1124.7V455.3H1131.3V463H1137.0" fill="none" stroke="#f03020" stroke-width="2.2"/>
<polyline points="1063.0,474.9 1063.5,475.7 1064.0,476.5 1064.5,477.1 1065.0,477.6 1065.5,477.9 1066.0,477.9 1066.5,477.7 1067.0,477.2 1067.5,476.6 1068.0,475.9 1068.5,475.1 1069.0,474.2 1069.5,473.4 1070.0,472.8 1070.5,472.3 1071.0,472.0 1071.5,471.9 1072.0,472.1 1072.5,472.5 1073.0,473.0 1073.5,473.8 1074.0,474.6 1074.5,475.4 1075.0,476.2 1075.5,476.9 1076.0,477.4 1076.5,477.8 1077.0,477.9 1077.5,477.8 1078.0,477.4 1078.5,476.9 1079.0,476.2 1079.5,475.4 1080.0,474.6 1080.5,473.8 1081.0,473.0 1081.5,472.5 1082.0,472.1 1082.5,471.9 1083.0,472.0 1083.5,472.3 1084.0,472.8 1084.5,473.4 1085.0,474.2 1085.5,475.1 1086.0,475.9 1086.5,476.6 1087.0,477.2 1087.5,477.7 1088.0,477.9 1088.5,477.9 1089.0,477.6 1089.5,477.1 1090.0,476.5 1090.5,475.7 1091.0,474.9 1091.5,474.1 1092.0,473.3 1092.5,472.7 1093.0,472.2 1093.5,471.9 1094.0,471.9 1094.5,472.1 1095.0,472.6 1095.5,473.2 1096.0,473.9 1096.5,474.7 1097.0,475.6 1097.5,476.4 1098.0,477.0 1098.5,477.5 1099.0,477.8 1099.5,477.9 1100.0,477.7 1100.5,477.3 1101.0,476.8 1101.5,476.0 1102.0,475.2 1102.5,474.4 1103.0,473.6 1103.5,472.9 1104.0,472.4 1104.5,472.0 1105.0,471.9 1105.5,472.0 1106.0,472.4 1106.5,472.9 1107.0,473.6 1107.5,474.4 1108.0,475.2 1108.5,476.0 1109.0,476.8 1109.5,477.3 1110.0,477.7 1110.5,477.9 1111.0,477.8 1111.5,477.5 1112.0,477.0 1112.5,476.4 1113.0,475.6 1113.5,474.7 1114.0,473.9 1114.5,473.2 1115.0,472.6 1115.5,472.1 1116.0,471.9 1116.5,471.9 1117.0,472.2 1117.5,472.7 1118.0,473.3 1118.5,474.1 1119.0,474.9 1119.5,475.7 1120.0,476.5 1120.5,477.1 1121.0,477.6 1121.5,477.9 1122.0,477.9 1122.5,477.7 1123.0,477.2 1123.5,476.6 1124.0,475.9 1124.5,475.1 1125.0,474.2 1125.5,473.4 1126.0,472.8 1126.5,472.3 1127.0,472.0 1127.5,471.9 1128.0,472.1 1128.5,472.5 1129.0,473.0 1129.5,473.8 1130.0,474.6 1130.5,475.4 1131.0,476.2 1131.5,476.9 1132.0,477.4 1132.5,477.8 1133.0,477.9 1133.5,477.8 1134.0,477.4 1134.5,476.9 1135.0,476.2 1135.5,475.4 1136.0,474.6 1136.5,473.8 1137.0,473.0" fill="none" stroke="#20d040" stroke-width="2.6"/>
<line x1="1324" y1="176" x2="1324" y2="272" stroke="#4a4ab0" stroke-width="1.5"/>
<defs><linearGradient id="pill" x1="0" y1="0" x2="0" y2="1"><stop offset="0" stop-color="#fbfbfb"/><stop offset="1" stop-color="#e6e6e6"/></linearGradient>
<linearGradient id="gball" x1="0" y1="0" x2="0" y2="1"><stop offset="0" stop-color="#2a8a5a"/><stop offset=".64" stop-color="#137a47"/><stop offset=".64" stop-color="#3cbc5a"/><stop offset="1" stop-color="#34b050"/></linearGradient></defs>
<rect x="912" y="745.5" width="104" height="35" rx="17.5" fill="url(#pill)" stroke="#cfcfcf"/>
<circle cx="920.6" cy="761.6" r="22.5" fill="#bfe8d0"/><circle cx="920.6" cy="761.6" r="20.5" fill="url(#gball)"/>
<ellipse cx="921" cy="745" rx="6" ry="2" fill="#8fd8b0" opacity=".7"/>
<text x="920.6" y="766.5" font-size="13" fill="#d8f4e4" text-anchor="middle">36%</text>
<path d="M949 751l2.5 3h-1.5v4h-2v-4h-1.5z" fill="#e86a6a"/><path d="M949 772l2.5-3h-1.5v-4h-2v4h-1.5z" fill="#4a9a6a"/>
<text x="988.7" y="759" font-size="8.5" fill="#333" text-anchor="end">21.8K/s</text><text x="988.7" y="773" font-size="8.5" fill="#333" text-anchor="end">0K/s</text>
<circle cx="1002" cy="762" r="7.5" fill="#2a6ad8"/><path d="M998 762h8M1002 758v8" stroke="#fff" stroke-width="1.8"/><circle cx="1007.5" cy="754.5" r="3.5" fill="#e83a2a"/>
<rect x="1413.5" y="397" width="8" height="99" rx="2" fill="#4a4a48"/>
</svg>
<!--/CIRCUIT-->
<!--SCOPE-->
<svg class="a" style="left:108px;top:237px" width="519" height="343" viewBox="108 237 519 343" font-family="Liberation Sans">
<defs>
<linearGradient id="cyl" x1="0" y1="0" x2="0" y2="1"><stop offset="0" stop-color="#3a3a3a"/><stop offset=".25" stop-color="#8a8a8a"/><stop offset=".5" stop-color="#f4f4f4"/><stop offset=".75" stop-color="#8a8a8a"/><stop offset="1" stop-color="#3a3a3a"/></linearGradient>
<linearGradient id="cylh" x1="0" y1="0" x2="1" y2="0"><stop offset="0" stop-color="#3a3a3a"/><stop offset=".25" stop-color="#8a8a8a"/><stop offset=".5" stop-color="#f4f4f4"/><stop offset=".75" stop-color="#8a8a8a"/><stop offset="1" stop-color="#3a3a3a"/></linearGradient>
<radialGradient id="knob" cx=".45" cy=".4" r=".65"><stop offset="0" stop-color="#c8c8c8"/><stop offset=".7" stop-color="#9a9a9a"/><stop offset="1" stop-color="#6a6a6a"/></radialGradient>
<linearGradient id="knobc" x1="0" y1="0" x2="1" y2="1"><stop offset="0" stop-color="#9a9a9a"/><stop offset=".45" stop-color="#f4f4f4"/><stop offset=".6" stop-color="#e0e0e0"/><stop offset="1" stop-color="#7a7a7a"/></linearGradient>
<linearGradient id="btn" x1="0" y1="0" x2="1" y2="1"><stop offset="0" stop-color="#303030"/><stop offset=".6" stop-color="#707070"/><stop offset="1" stop-color="#c8c8c8"/></linearGradient>
</defs>
<rect x="108.5" y="237.5" width="518" height="342" fill="#f0f0f0" stroke="#6a6a6a"/>
<rect x="109" y="238" width="517" height="24" fill="#fff"/>
<text x="112" y="253.5" font-size="12.3" fill="#2a2a2a">Digital Oscilloscope</text>
<rect x="607" y="239" width="18" height="18" fill="#d8402c"/><path d="M612.5 244.5l7 7M619.5 244.5l-7 7" stroke="#fff" stroke-width="1.3"/>
<rect x="110" y="262" width="303" height="302" fill="#020202"/>
<line x1="110" y1="262.5" x2="413" y2="262.5" stroke="#555"/>
<g stroke="#15291b" stroke-width="1"><line x1="126.1" y1="262" x2="126.1" y2="564"/><line x1="141.2" y1="262" x2="141.2" y2="564"/><line x1="156.2" y1="262" x2="156.2" y2="564"/><line x1="171.3" y1="262" x2="171.3" y2="564"/><line x1="186.4" y1="262" x2="186.4" y2="564"/><line x1="201.5" y1="262" x2="201.5" y2="564"/><line x1="216.6" y1="262" x2="216.6" y2="564"/><line x1="231.6" y1="262" x2="231.6" y2="564"/><line x1="246.7" y1="262" x2="246.7" y2="564"/><line x1="276.9" y1="262" x2="276.9" y2="564"/><line x1="292.0" y1="262" x2="292.0" y2="564"/><line x1="307.0" y1="262" x2="307.0" y2="564"/><line x1="322.1" y1="262" x2="322.1" y2="564"/><line x1="337.2" y1="262" x2="337.2" y2="564"/><line x1="352.3" y1="262" x2="352.3" y2="564"/><line x1="367.4" y1="262" x2="367.4" y2="564"/><line x1="382.4" y1="262" x2="382.4" y2="564"/><line x1="397.5" y1="262" x2="397.5" y2="564"/><line x1="110" y1="263.3" x2="413" y2="263.3"/><line x1="110" y1="278.4" x2="413" y2="278.4"/><line x1="110" y1="293.5" x2="413" y2="293.5"/><line x1="110" y1="308.6" x2="413" y2="308.6"/><line x1="110" y1="323.7" x2="413" y2="323.7"/><line x1="110" y1="353.9" x2="413" y2="353.9"/><line x1="110" y1="369.0" x2="413" y2="369.0"/><line x1="110" y1="384.1" x2="413" y2="384.1"/><line x1="110" y1="399.2" x2="413" y2="399.2"/><line x1="110" y1="414.3" x2="413" y2="414.3"/><line x1="110" y1="429.4" x2="413" y2="429.4"/><line x1="110" y1="444.5" x2="413" y2="444.5"/><line x1="110" y1="459.6" x2="413" y2="459.6"/><line x1="110" y1="474.7" x2="413" y2="474.7"/><line x1="110" y1="489.8" x2="413" y2="489.8"/><line x1="110" y1="504.9" x2="413" y2="504.9"/><line x1="110" y1="520.0" x2="413" y2="520.0"/><line x1="110" y1="535.1" x2="413" y2="535.1"/><line x1="110" y1="550.2" x2="413" y2="550.2"/></g>
<g stroke="#7a7a7a" stroke-width="1" stroke-dasharray="2 2"><line x1="262" y1="262" x2="262" y2="564"/><line x1="110" y1="338.8" x2="413" y2="338.8"/></g>
<line x1="110" y1="383.3" x2="413" y2="383.3" stroke="#5a9ac8" stroke-width="1.3"/>
<line x1="110" y1="443.4" x2="413" y2="443.4" stroke="#8a4a6a" stroke-width="1.3"/>
<line x1="110" y1="503.9" x2="413" y2="503.9" stroke="#3aa06a" stroke-width="1.3"/>
<path d="M111.0 362.0 L125.4 354.5 L125.4 273.7 L159.2 291.3 L159.2 372.4 L193.6 354.5 L193.6 273.7 L227.4 291.3 L227.4 372.4 L261.8 354.5 L261.8 273.7 L295.6 291.3 L295.6 372.4 L330.0 354.5 L330.0 273.7 L363.8 291.3 L363.8 372.4 L398.2 354.5 L398.2 273.7 L413.0 281.4" fill="none" stroke="#d4d48a" stroke-width="1.4"/>
<rect x="110" y="564" width="303" height="14" fill="#e6e6e6"/><rect x="127" y="566" width="270" height="10" fill="#d4d4d4"/>
<path d="M118 568l-3 3 3 3" fill="none" stroke="#444" stroke-width="1.2"/><path d="M405 568l3 3-3 3" fill="none" stroke="#444" stroke-width="1.2"/>
<rect x="413" y="262" width="213" height="317" fill="#b7b7b7"/>
<g stroke="#6e6e6e" stroke-width="1.3"><line x1="413.5" y1="262" x2="413.5" y2="579"/><line x1="485" y1="262" x2="485" y2="579"/><line x1="556" y1="262" x2="556" y2="579"/><line x1="625.5" y1="262" x2="625.5" y2="579"/><line x1="413" y1="280.3" x2="626" y2="280.3"/><line x1="413" y1="419.5" x2="626" y2="419.5"/><line x1="413" y1="439" x2="626" y2="439"/><line x1="413" y1="578.5" x2="626" y2="578.5"/></g>
<g stroke="#d4d4d4" stroke-width="1"><line x1="415" y1="282" x2="415" y2="418"/><line x1="487" y1="282" x2="487" y2="418"/><line x1="558" y1="282" x2="558" y2="418"/><line x1="415" y1="441" x2="415" y2="577"/><line x1="487" y1="441" x2="487" y2="577"/><line x1="558" y1="441" x2="558" y2="577"/></g>
<text x="520" y="274.5" font-size="9" fill="#e6dc3a" text-anchor="middle" font-weight="bold">Channel A</text>
<text x="508" y="288" font-size="7" fill="#2a2a2a" text-anchor="middle" font-weight="normal">Position</text>
<rect x="494.5" y="291" width="28.5" height="59.5" fill="#9a9a9a" stroke="#5a5a5a"/>
<rect x="499.0" y="294" width="19.5" height="53.5" fill="url(#cyl)" stroke="#4a4a4a" stroke-width=".6"/>
<text x="509.75" y="306.5" font-size="7.5" fill="#1a1a1a" text-anchor="middle" font-weight="normal">110</text>
<text x="509.75" y="321.5" font-size="7.5" fill="#1a1a1a" text-anchor="middle" font-weight="normal">120</text>
<text x="509.75" y="336.5" font-size="7.5" fill="#1a1a1a" text-anchor="middle" font-weight="normal">130</text>
<path d="M494.0 315.5l4.5 3.5-4.5 3.5z" fill="#e02020"/><path d="M523.5 315.5l-4.5 3.5 4.5 3.5z" fill="#e02020"/>
<line x1="514.0" y1="297" x2="516.0" y2="297" stroke="#777" stroke-width=".4"/>
<line x1="514.0" y1="300" x2="516.0" y2="300" stroke="#777" stroke-width=".4"/>
<line x1="514.0" y1="303" x2="516.0" y2="303" stroke="#777" stroke-width=".4"/>
<line x1="514.0" y1="306" x2="516.0" y2="306" stroke="#777" stroke-width=".4"/>
<line x1="514.0" y1="309" x2="516.0" y2="309" stroke="#777" stroke-width=".4"/>
<line x1="514.0" y1="312" x2="516.0" y2="312" stroke="#777" stroke-width=".4"/>
<line x1="514.0" y1="315" x2="516.0" y2="315" stroke="#777" stroke-width=".4"/>
<line x1="514.0" y1="318" x2="516.0" y2="318" stroke="#777" stroke-width=".4"/>
<line x1="514.0" y1="321" x2="516.0" y2="321" stroke="#777" stroke-width=".4"/>
<line x1="514.0" y1="324" x2="516.0" y2="324" stroke="#777" stroke-width=".4"/>
<line x1="514.0" y1="327" x2="516.0" y2="327" stroke="#777" stroke-width=".4"/>
<line x1="514.0" y1="330" x2="516.0" y2="330" stroke="#777" stroke-width=".4"/>
<line x1="514.0" y1="333" x2="516.0" y2="333" stroke="#777" stroke-width=".4"/>
<line x1="514.0" y1="336" x2="516.0" y2="336" stroke="#777" stroke-width=".4"/>
<line x1="514.0" y1="339" x2="516.0" y2="339" stroke="#777" stroke-width=".4"/>
<line x1="514.0" y1="342" x2="516.0" y2="342" stroke="#777" stroke-width=".4"/>
<line x1="514.0" y1="345" x2="516.0" y2="345" stroke="#777" stroke-width=".4"/>
<text x="541" y="293.5" font-size="7" fill="#333" text-anchor="end" font-weight="normal">AC</text>
<text x="541" y="303.5" font-size="7" fill="#333" text-anchor="end" font-weight="normal">DC</text>
<text x="541" y="314" font-size="7" fill="#333" text-anchor="end" font-weight="normal">GND</text>
<text x="541" y="324" font-size="7" fill="#333" text-anchor="end" font-weight="normal">OFF</text>
<rect x="544" y="283" width="10.5" height="46" fill="#c4c4c4" stroke="#5a5a5a"/>
<rect x="547.75" y="287" width="3" height="38" fill="#3a3a3a"/>
<rect x="545.5" y="284.5" width="7.5" height="8.5" fill="#dcdcdc" stroke="#777" stroke-width=".6"/>
<line x1="546.5" y1="286.5" x2="552.0" y2="286.5" stroke="#888" stroke-width=".5"/>
<line x1="546.5" y1="288.5" x2="552.0" y2="288.5" stroke="#888" stroke-width=".5"/>
<line x1="546.5" y1="290.5" x2="552.0" y2="290.5" stroke="#888" stroke-width=".5"/>
<text x="542" y="339" font-size="6.5" fill="#333" text-anchor="end" font-weight="normal">Invert</text>
<rect x="544" y="331.5" width="10.5" height="10" fill="url(#btn)" stroke="#4a4a4a" stroke-width=".8"/>
<text x="542" y="351" font-size="6.5" fill="#333" text-anchor="end" font-weight="normal">A+B</text>
<rect x="544" y="342.5" width="10.5" height="11" fill="url(#btn)" stroke="#4a4a4a" stroke-width=".8"/>
<path d="M488.8 419V386A32.49999999999997 32.49999999999997 0 0 1 553.8 386V419z" fill="#f8f8f8" stroke="#8a8a8a" stroke-width=".8"/>
<rect x="506.79999999999995" y="403" width="29" height="16" fill="#a8a8a8"/>
<text x="508.8" y="361.5" font-size="5.2" fill="#444" text-anchor="middle" font-weight="normal">0.5</text>
<text x="520.3" y="360.5" font-size="5.2" fill="#444" text-anchor="middle" font-weight="normal">0.2</text>
<text x="531.8" y="361.5" font-size="5.2" fill="#444" text-anchor="middle" font-weight="normal">0.1</text>
<text x="500.8" y="367.5" font-size="5.2" fill="#444" text-anchor="middle" font-weight="normal">1</text>
<text x="493.8" y="377" font-size="5.2" fill="#444" text-anchor="middle" font-weight="normal">2</text>
<text x="491.8" y="388" font-size="5.2" fill="#444" text-anchor="middle" font-weight="normal">5</text>
<text x="493.8" y="399.5" font-size="5.2" fill="#444" text-anchor="middle" font-weight="normal">10</text>
<text x="497.8" y="409.5" font-size="5.2" fill="#444" text-anchor="middle" font-weight="normal">20</text>
<text x="540.8" y="367.5" font-size="5.2" fill="#444" text-anchor="middle" font-weight="normal">50</text>
<text x="548.8" y="377.5" font-size="5.2" fill="#444" text-anchor="middle" font-weight="normal">20</text>
<text x="550.8" y="388" font-size="5.2" fill="#444" text-anchor="middle" font-weight="normal">10</text>
<text x="549.8" y="399.5" font-size="5.2" fill="#444" text-anchor="middle" font-weight="normal">5</text>
<text x="541.8" y="409.5" font-size="5.2" fill="#444" text-anchor="middle" font-weight="normal">2</text>
<circle cx="521.3" cy="386" r="21.5" fill="url(#knob)" stroke="#5a5a5a" stroke-width=".8"/>
<circle cx="521.3" cy="386" r="10.8" fill="url(#knobc)" stroke="#6a6a6a" stroke-width=".6"/>
<rect x="507" y="408.5" width="27.5" height="10" fill="#fff" stroke="#555" stroke-width=".8"/>
<text x="509" y="416.5" font-size="7.5" fill="#222" text-anchor="start" font-weight="normal">0.2</text>
<text x="497" y="416.5" font-size="8" fill="#333" text-anchor="middle" font-weight="normal">V</text>
<text x="545" y="416.5" font-size="7.5" fill="#333" text-anchor="middle" font-weight="normal">mV</text>
<path d="M520.3 363l5 6h-10z" fill="#e6dc3a"/>
<circle cx="527.3" cy="392" r="2" fill="#e6dc3a"/>
<text x="591" y="274.5" font-size="9" fill="#d83a7a" text-anchor="middle" font-weight="bold">Channel C</text>
<text x="579" y="288" font-size="7" fill="#2a2a2a" text-anchor="middle" font-weight="normal">Position</text>
<rect x="565.5" y="291" width="28.5" height="59.5" fill="#9a9a9a" stroke="#5a5a5a"/>
<rect x="570.0" y="294" width="19.5" height="53.5" fill="url(#cyl)" stroke="#4a4a4a" stroke-width=".6"/>
<text x="580.75" y="306.5" font-size="7.5" fill="#1a1a1a" text-anchor="middle" font-weight="normal">-50</text>
<text x="580.75" y="321.5" font-size="7.5" fill="#1a1a1a" text-anchor="middle" font-weight="normal">40</text>
<text x="580.75" y="336.5" font-size="7.5" fill="#1a1a1a" text-anchor="middle" font-weight="normal">-30</text>
<path d="M565.0 315.5l4.5 3.5-4.5 3.5z" fill="#e02020"/><path d="M594.5 315.5l-4.5 3.5 4.5 3.5z" fill="#e02020"/>
<line x1="585.0" y1="297" x2="587.0" y2="297" stroke="#777" stroke-width=".4"/>
<line x1="585.0" y1="300" x2="587.0" y2="300" stroke="#777" stroke-width=".4"/>
<line x1="585.0" y1="303" x2="587.0" y2="303" stroke="#777" stroke-width=".4"/>
<line x1="585.0" y1="306" x2="587.0" y2="306" stroke="#777" stroke-width=".4"/>
<line x1="585.0" y1="309" x2="587.0" y2="309" stroke="#777" stroke-width=".4"/>
<line x1="585.0" y1="312" x2="587.0" y2="312" stroke="#777" stroke-width=".4"/>
<line x1="585.0" y1="315" x2="587.0" y2="315" stroke="#777" stroke-width=".4"/>
<line x1="585.0" y1="318" x2="587.0" y2="318" stroke="#777" stroke-width=".4"/>
<line x1="585.0" y1="321" x2="587.0" y2="321" stroke="#777" stroke-width=".4"/>
<line x1="585.0" y1="324" x2="587.0" y2="324" stroke="#777" stroke-width=".4"/>
<line x1="585.0" y1="327" x2="587.0" y2="327" stroke="#777" stroke-width=".4"/>
<line x1="585.0" y1="330" x2="587.0" y2="330" stroke="#777" stroke-width=".4"/>
<line x1="585.0" y1="333" x2="587.0" y2="333" stroke="#777" stroke-width=".4"/>
<line x1="585.0" y1="336" x2="587.0" y2="336" stroke="#777" stroke-width=".4"/>
<line x1="585.0" y1="339" x2="587.0" y2="339" stroke="#777" stroke-width=".4"/>
<line x1="585.0" y1="342" x2="587.0" y2="342" stroke="#777" stroke-width=".4"/>
<line x1="585.0" y1="345" x2="587.0" y2="345" stroke="#777" stroke-width=".4"/>
<text x="612" y="293.5" font-size="7" fill="#333" text-anchor="end" font-weight="normal">AC</text>
<text x="612" y="303.5" font-size="7" fill="#333" text-anchor="end" font-weight="normal">DC</text>
<text x="612" y="314" font-size="7" fill="#333" text-anchor="end" font-weight="normal">GND</text>
<text x="612" y="324" font-size="7" fill="#333" text-anchor="end" font-weight="normal">OFF</text>
<rect x="615" y="283" width="10.5" height="46" fill="#c4c4c4" stroke="#5a5a5a"/>
<rect x="618.75" y="287" width="3" height="38" fill="#3a3a3a"/>
<rect x="616.5" y="284.5" width="7.5" height="8.5" fill="#dcdcdc" stroke="#777" stroke-width=".6"/>
<line x1="617.5" y1="286.5" x2="623.0" y2="286.5" stroke="#888" stroke-width=".5"/>
<line x1="617.5" y1="288.5" x2="623.0" y2="288.5" stroke="#888" stroke-width=".5"/>
<line x1="617.5" y1="290.5" x2="623.0" y2="290.5" stroke="#888" stroke-width=".5"/>
<text x="613" y="339" font-size="6.5" fill="#333" text-anchor="end" font-weight="normal">Invert</text>
<rect x="615" y="331.5" width="10.5" height="10" fill="url(#btn)" stroke="#4a4a4a" stroke-width=".8"/>
<text x="613" y="351" font-size="6.5" fill="#333" text-anchor="end" font-weight="normal">C+D</text>
<rect x="615" y="342.5" width="10.5" height="11" fill="url(#btn)" stroke="#4a4a4a" stroke-width=".8"/>
<path d="M559.8 419V386A32.5 32.5 0 0 1 624.8 386V419z" fill="#f8f8f8" stroke="#8a8a8a" stroke-width=".8"/>
<rect x="577.8" y="403" width="29" height="16" fill="#a8a8a8"/>
<text x="579.8" y="361.5" font-size="5.2" fill="#444" text-anchor="middle" font-weight="normal">0.5</text>
<text x="591.3" y="360.5" font-size="5.2" fill="#444" text-anchor="middle" font-weight="normal">0.2</text>
<text x="602.8" y="361.5" font-size="5.2" fill="#444" text-anchor="middle" font-weight="normal">0.1</text>
<text x="571.8" y="367.5" font-size="5.2" fill="#444" text-anchor="middle" font-weight="normal">1</text>
<text x="564.8" y="377" font-size="5.2" fill="#444" text-anchor="middle" font-weight="normal">2</text>
<text x="562.8" y="388" font-size="5.2" fill="#444" text-anchor="middle" font-weight="normal">5</text>
<text x="564.8" y="399.5" font-size="5.2" fill="#444" text-anchor="middle" font-weight="normal">10</text>
<text x="568.8" y="409.5" font-size="5.2" fill="#444" text-anchor="middle" font-weight="normal">20</text>
<text x="611.8" y="367.5" font-size="5.2" fill="#444" text-anchor="middle" font-weight="normal">50</text>
<text x="619.8" y="377.5" font-size="5.2" fill="#444" text-anchor="middle" font-weight="normal">20</text>
<text x="621.8" y="388" font-size="5.2" fill="#444" text-anchor="middle" font-weight="normal">10</text>
<text x="620.8" y="399.5" font-size="5.2" fill="#444" text-anchor="middle" font-weight="normal">5</text>
<text x="612.8" y="409.5" font-size="5.2" fill="#444" text-anchor="middle" font-weight="normal">2</text>
<circle cx="592.3" cy="386" r="21.5" fill="url(#knob)" stroke="#5a5a5a" stroke-width=".8"/>
<circle cx="592.3" cy="386" r="10.8" fill="url(#knobc)" stroke="#6a6a6a" stroke-width=".6"/>
<rect x="578" y="408.5" width="27.5" height="10" fill="#fff" stroke="#555" stroke-width=".8"/>
<text x="580" y="416.5" font-size="7.5" fill="#222" text-anchor="start" font-weight="normal">5</text>
<text x="568" y="416.5" font-size="8" fill="#333" text-anchor="middle" font-weight="normal">V</text>
<text x="616" y="416.5" font-size="7.5" fill="#333" text-anchor="middle" font-weight="normal">mV</text>
<path d="M571 386l7-5v10z" fill="#d83a7a"/>
<circle cx="599.3" cy="392" r="2" fill="#d83a7a"/>
<path d="M560.5 312l3 4h-6zM560.5 326l3-4h-6z" fill="#e860b0"/><line x1="560.5" y1="315" x2="560.5" y2="323" stroke="#e860b0" stroke-width="1"/>
<text x="520" y="432.0" font-size="9" fill="#3a8ad8" text-anchor="middle" font-weight="bold">Channel B</text>
<text x="508" y="445.5" font-size="7" fill="#2a2a2a" text-anchor="middle" font-weight="normal">Position</text>
<rect x="494.5" y="448.5" width="28.5" height="59.5" fill="#9a9a9a" stroke="#5a5a5a"/>
<rect x="499.0" y="451.5" width="19.5" height="53.5" fill="url(#cyl)" stroke="#4a4a4a" stroke-width=".6"/>
<text x="509.75" y="464.0" font-size="7.5" fill="#1a1a1a" text-anchor="middle" font-weight="normal">30</text>
<text x="509.75" y="479.0" font-size="7.5" fill="#1a1a1a" text-anchor="middle" font-weight="normal">40</text>
<text x="509.75" y="494.0" font-size="7.5" fill="#1a1a1a" text-anchor="middle" font-weight="normal">50</text>
<path d="M494.0 473.0l4.5 3.5-4.5 3.5z" fill="#e02020"/><path d="M523.5 473.0l-4.5 3.5 4.5 3.5z" fill="#e02020"/>
<line x1="514.0" y1="454" x2="516.0" y2="454" stroke="#777" stroke-width=".4"/>
<line x1="514.0" y1="457" x2="516.0" y2="457" stroke="#777" stroke-width=".4"/>
<line x1="514.0" y1="460" x2="516.0" y2="460" stroke="#777" stroke-width=".4"/>
<line x1="514.0" y1="463" x2="516.0" y2="463" stroke="#777" stroke-width=".4"/>
<line x1="514.0" y1="466" x2="516.0" y2="466" stroke="#777" stroke-width=".4"/>
<line x1="514.0" y1="469" x2="516.0" y2="469" stroke="#777" stroke-width=".4"/>
<line x1="514.0" y1="472" x2="516.0" y2="472" stroke="#777" stroke-width=".4"/>
<line x1="514.0" y1="475" x2="516.0" y2="475" stroke="#777" stroke-width=".4"/>
<line x1="514.0" y1="478" x2="516.0" y2="478" stroke="#777" stroke-width=".4"/>
<line x1="514.0" y1="481" x2="516.0" y2="481" stroke="#777" stroke-width=".4"/>
<line x1="514.0" y1="484" x2="516.0" y2="484" stroke="#777" stroke-width=".4"/>
<line x1="514.0" y1="487" x2="516.0" y2="487" stroke="#777" stroke-width=".4"/>
<line x1="514.0" y1="490" x2="516.0" y2="490" stroke="#777" stroke-width=".4"/>
<line x1="514.0" y1="493" x2="516.0" y2="493" stroke="#777" stroke-width=".4"/>
<line x1="514.0" y1="496" x2="516.0" y2="496" stroke="#777" stroke-width=".4"/>
<line x1="514.0" y1="499" x2="516.0" y2="499" stroke="#777" stroke-width=".4"/>
<line x1="514.0" y1="502" x2="516.0" y2="502" stroke="#777" stroke-width=".4"/>
<text x="541" y="451.0" font-size="7" fill="#333" text-anchor="end" font-weight="normal">AC</text>
<text x="541" y="461.0" font-size="7" fill="#333" text-anchor="end" font-weight="normal">DC</text>
<text x="541" y="471.5" font-size="7" fill="#333" text-anchor="end" font-weight="normal">GND</text>
<text x="541" y="481.5" font-size="7" fill="#333" text-anchor="end" font-weight="normal">OFF</text>
<rect x="544" y="440.5" width="10.5" height="46" fill="#c4c4c4" stroke="#5a5a5a"/>
<rect x="547.75" y="444.5" width="3" height="38" fill="#3a3a3a"/>
<rect x="545.5" y="442.0" width="7.5" height="8.5" fill="#dcdcdc" stroke="#777" stroke-width=".6"/>
<line x1="546.5" y1="444.0" x2="552.0" y2="444.0" stroke="#888" stroke-width=".5"/>
<line x1="546.5" y1="446.0" x2="552.0" y2="446.0" stroke="#888" stroke-width=".5"/>
<line x1="546.5" y1="448.0" x2="552.0" y2="448.0" stroke="#888" stroke-width=".5"/>
<text x="542" y="496.5" font-size="6.5" fill="#333" text-anchor="end" font-weight="normal">Invert</text>
<rect x="544" y="489.0" width="10.5" height="10" fill="url(#btn)" stroke="#4a4a4a" stroke-width=".8"/>
<path d="M488.8 576.5V543.5A32.49999999999997 32.49999999999997 0 0 1 553.8 543.5V576.5z" fill="#f8f8f8" stroke="#8a8a8a" stroke-width=".8"/>
<rect x="506.79999999999995" y="560.5" width="29" height="16.0" fill="#a8a8a8"/>
<text x="508.8" y="519.0" font-size="5.2" fill="#444" text-anchor="middle" font-weight="normal">0.5</text>
<text x="520.3" y="518.0" font-size="5.2" fill="#444" text-anchor="middle" font-weight="normal">0.2</text>
<text x="531.8" y="519.0" font-size="5.2" fill="#444" text-anchor="middle" font-weight="normal">0.1</text>
<text x="500.8" y="525.0" font-size="5.2" fill="#444" text-anchor="middle" font-weight="normal">1</text>
<text x="493.8" y="534.5" font-size="5.2" fill="#444" text-anchor="middle" font-weight="normal">2</text>
<text x="491.8" y="545.5" font-size="5.2" fill="#444" text-anchor="middle" font-weight="normal">5</text>
<text x="493.8" y="557.0" font-size="5.2" fill="#444" text-anchor="middle" font-weight="normal">10</text>
<text x="497.8" y="567.0" font-size="5.2" fill="#444" text-anchor="middle" font-weight="normal">20</text>
<text x="540.8" y="525.0" font-size="5.2" fill="#444" text-anchor="middle" font-weight="normal">50</text>
<text x="548.8" y="535.0" font-size="5.2" fill="#444" text-anchor="middle" font-weight="normal">20</text>
<text x="550.8" y="545.5" font-size="5.2" fill="#444" text-anchor="middle" font-weight="normal">10</text>
<text x="549.8" y="557.0" font-size="5.2" fill="#444" text-anchor="middle" font-weight="normal">5</text>
<text x="541.8" y="567.0" font-size="5.2" fill="#444" text-anchor="middle" font-weight="normal">2</text>
<circle cx="521.3" cy="543.5" r="21.5" fill="url(#knob)" stroke="#5a5a5a" stroke-width=".8"/>
<circle cx="521.3" cy="543.5" r="10.8" fill="url(#knobc)" stroke="#6a6a6a" stroke-width=".6"/>
<rect x="507" y="566.0" width="27.5" height="10" fill="#fff" stroke="#555" stroke-width=".8"/>
<text x="509" y="574.0" font-size="7.5" fill="#222" text-anchor="start" font-weight="normal">5</text>
<text x="497" y="574.0" font-size="8" fill="#333" text-anchor="middle" font-weight="normal">V</text>
<text x="545" y="574.0" font-size="7.5" fill="#333" text-anchor="middle" font-weight="normal">mV</text>
<path d="M500 543.5l7-5v10z" fill="#3a8ad8"/>
<circle cx="528.3" cy="549.5" r="2" fill="#3a8ad8"/>
<path d="M489.5 469.5l3 4h-6zM489.5 483.5l3-4h-6z" fill="#3a9ae8"/><line x1="489.5" y1="472.5" x2="489.5" y2="480.5" stroke="#3a9ae8" stroke-width="1"/>
<text x="591" y="432.0" font-size="9" fill="#2a9a6a" text-anchor="middle" font-weight="bold">Channel D</text>
<text x="579" y="445.5" font-size="7" fill="#2a2a2a" text-anchor="middle" font-weight="normal">Position</text>
<rect x="565.5" y="448.5" width="28.5" height="59.5" fill="#9a9a9a" stroke="#5a5a5a"/>
<rect x="570.0" y="451.5" width="19.5" height="53.5" fill="url(#cyl)" stroke="#4a4a4a" stroke-width=".6"/>
<text x="580.75" y="464.0" font-size="7.5" fill="#1a1a1a" text-anchor="middle" font-weight="normal">130</text>
<text x="580.75" y="479.0" font-size="7.5" fill="#1a1a1a" text-anchor="middle" font-weight="normal">-120</text>
<text x="580.75" y="494.0" font-size="7.5" fill="#1a1a1a" text-anchor="middle" font-weight="normal">-110</text>
<path d="M565.0 473.0l4.5 3.5-4.5 3.5z" fill="#e02020"/><path d="M594.5 473.0l-4.5 3.5 4.5 3.5z" fill="#e02020"/>
<line x1="585.0" y1="454" x2="587.0" y2="454" stroke="#777" stroke-width=".4"/>
<line x1="585.0" y1="457" x2="587.0" y2="457" stroke="#777" stroke-width=".4"/>
<line x1="585.0" y1="460" x2="587.0" y2="460" stroke="#777" stroke-width=".4"/>
<line x1="585.0" y1="463" x2="587.0" y2="463" stroke="#777" stroke-width=".4"/>
<line x1="585.0" y1="466" x2="587.0" y2="466" stroke="#777" stroke-width=".4"/>
<line x1="585.0" y1="469" x2="587.0" y2="469" stroke="#777" stroke-width=".4"/>
<line x1="585.0" y1="472" x2="587.0" y2="472" stroke="#777" stroke-width=".4"/>
<line x1="585.0" y1="475" x2="587.0" y2="475" stroke="#777" stroke-width=".4"/>
<line x1="585.0" y1="478" x2="587.0" y2="478" stroke="#777" stroke-width=".4"/>
<line x1="585.0" y1="481" x2="587.0" y2="481" stroke="#777" stroke-width=".4"/>
<line x1="585.0" y1="484" x2="587.0" y2="484" stroke="#777" stroke-width=".4"/>
<line x1="585.0" y1="487" x2="587.0" y2="487" stroke="#777" stroke-width=".4"/>
<line x1="585.0" y1="490" x2="587.0" y2="490" stroke="#777" stroke-width=".4"/>
<line x1="585.0" y1="493" x2="587.0" y2="493" stroke="#777" stroke-width=".4"/>
<line x1="585.0" y1="496" x2="587.0" y2="496" stroke="#777" stroke-width=".4"/>
<line x1="585.0" y1="499" x2="587.0" y2="499" stroke="#777" stroke-width=".4"/>
<line x1="585.0" y1="502" x2="587.0" y2="502" stroke="#777" stroke-width=".4"/>
<text x="612" y="451.0" font-size="7" fill="#333" text-anchor="end" font-weight="normal">AC</text>
<text x="612" y="461.0" font-size="7" fill="#333" text-anchor="end" font-weight="normal">DC</text>
<text x="612" y="471.5" font-size="7" fill="#333" text-anchor="end" font-weight="normal">GND</text>
<text x="612" y="481.5" font-size="7" fill="#333" text-anchor="end" font-weight="normal">OFF</text>
<rect x="615" y="440.5" width="10.5" height="46" fill="#c4c4c4" stroke="#5a5a5a"/>
<rect x="618.75" y="444.5" width="3" height="38" fill="#3a3a3a"/>
<rect x="616.5" y="442.0" width="7.5" height="8.5" fill="#dcdcdc" stroke="#777" stroke-width=".6"/>
<line x1="617.5" y1="444.0" x2="623.0" y2="444.0" stroke="#888" stroke-width=".5"/>
<line x1="617.5" y1="446.0" x2="623.0" y2="446.0" stroke="#888" stroke-width=".5"/>
<line x1="617.5" y1="448.0" x2="623.0" y2="448.0" stroke="#888" stroke-width=".5"/>
<text x="613" y="496.5" font-size="6.5" fill="#333" text-anchor="end" font-weight="normal">Invert</text>
<rect x="615" y="489.0" width="10.5" height="10" fill="url(#btn)" stroke="#4a4a4a" stroke-width=".8"/>
<path d="M559.8 576.5V543.5A32.5 32.5 0 0 1 624.8 543.5V576.5z" fill="#f8f8f8" stroke="#8a8a8a" stroke-width=".8"/>
<rect x="577.8" y="560.5" width="29" height="16.0" fill="#a8a8a8"/>
<text x="579.8" y="519.0" font-size="5.2" fill="#444" text-anchor="middle" font-weight="normal">0.5</text>
<text x="591.3" y="518.0" font-size="5.2" fill="#444" text-anchor="middle" font-weight="normal">0.2</text>
<text x="602.8" y="519.0" font-size="5.2" fill="#444" text-anchor="middle" font-weight="normal">0.1</text>
<text x="571.8" y="525.0" font-size="5.2" fill="#444" text-anchor="middle" font-weight="normal">1</text>
<text x="564.8" y="534.5" font-size="5.2" fill="#444" text-anchor="middle" font-weight="normal">2</text>
<text x="562.8" y="545.5" font-size="5.2" fill="#444" text-anchor="middle" font-weight="normal">5</text>
<text x="564.8" y="557.0" font-size="5.2" fill="#444" text-anchor="middle" font-weight="normal">10</text>
<text x="568.8" y="567.0" font-size="5.2" fill="#444" text-anchor="middle" font-weight="normal">20</text>
<text x="611.8" y="525.0" font-size="5.2" fill="#444" text-anchor="middle" font-weight="normal">50</text>
<text x="619.8" y="535.0" font-size="5.2" fill="#444" text-anchor="middle" font-weight="normal">20</text>
<text x="621.8" y="545.5" font-size="5.2" fill="#444" text-anchor="middle" font-weight="normal">10</text>
<text x="620.8" y="557.0" font-size="5.2" fill="#444" text-anchor="middle" font-weight="normal">5</text>
<text x="612.8" y="567.0" font-size="5.2" fill="#444" text-anchor="middle" font-weight="normal">2</text>
<circle cx="592.3" cy="543.5" r="21.5" fill="url(#knob)" stroke="#5a5a5a" stroke-width=".8"/>
<circle cx="592.3" cy="543.5" r="10.8" fill="url(#knobc)" stroke="#6a6a6a" stroke-width=".6"/>
<rect x="578" y="566.0" width="27.5" height="10" fill="#fff" stroke="#555" stroke-width=".8"/>
<text x="580" y="574.0" font-size="7.5" fill="#222" text-anchor="start" font-weight="normal">5</text>
<text x="568" y="574.0" font-size="8" fill="#333" text-anchor="middle" font-weight="normal">V</text>
<text x="616" y="574.0" font-size="7.5" fill="#333" text-anchor="middle" font-weight="normal">mV</text>
<path d="M571 543.5l7-5v10z" fill="#2a9a6a"/>
<circle cx="599.3" cy="549.5" r="2" fill="#2a9a6a"/>
<path d="M560.5 469.5l3 4h-6zM560.5 483.5l3-4h-6z" fill="#2aa06a"/><line x1="560.5" y1="472.5" x2="560.5" y2="480.5" stroke="#2aa06a" stroke-width="1"/>
<circle cx="489.5" cy="313" r="2.6" fill="#e8e040"/>
<text x="449" y="274" font-size="9" fill="#f09a9a" text-anchor="middle" font-weight="bold">Trigger</text>
<text x="438" y="289" font-size="7" fill="#2a2a2a" text-anchor="middle" font-weight="normal">Level</text>
<rect x="423.5" y="290.5" width="29" height="60" fill="#9a9a9a" stroke="#5a5a5a"/>
<rect x="428.0" y="293.5" width="20" height="54" fill="url(#cyl)" stroke="#4a4a4a" stroke-width=".6"/>
<text x="439.0" y="309.3" font-size="7.5" fill="#1a1a1a" text-anchor="middle" font-weight="normal">-30</text>
<text x="439.0" y="323.7" font-size="7.5" fill="#1a1a1a" text-anchor="middle" font-weight="normal">-20</text>
<text x="439.0" y="339.0" font-size="7.5" fill="#1a1a1a" text-anchor="middle" font-weight="normal">-10</text>
<path d="M423.0 317.7l4.5 3.5-4.5 3.5z" fill="#e02020"/><path d="M453.0 317.7l-4.5 3.5 4.5 3.5z" fill="#e02020"/>
<line x1="443.5" y1="296" x2="445.5" y2="296" stroke="#777" stroke-width=".4"/>
<line x1="443.5" y1="299" x2="445.5" y2="299" stroke="#777" stroke-width=".4"/>
<line x1="443.5" y1="302" x2="445.5" y2="302" stroke="#777" stroke-width=".4"/>
<line x1="443.5" y1="305" x2="445.5" y2="305" stroke="#777" stroke-width=".4"/>
<line x1="443.5" y1="308" x2="445.5" y2="308" stroke="#777" stroke-width=".4"/>
<line x1="443.5" y1="311" x2="445.5" y2="311" stroke="#777" stroke-width=".4"/>
<line x1="443.5" y1="314" x2="445.5" y2="314" stroke="#777" stroke-width=".4"/>
<line x1="443.5" y1="317" x2="445.5" y2="317" stroke="#777" stroke-width=".4"/>
<line x1="443.5" y1="320" x2="445.5" y2="320" stroke="#777" stroke-width=".4"/>
<line x1="443.5" y1="323" x2="445.5" y2="323" stroke="#777" stroke-width=".4"/>
<line x1="443.5" y1="326" x2="445.5" y2="326" stroke="#777" stroke-width=".4"/>
<line x1="443.5" y1="329" x2="445.5" y2="329" stroke="#777" stroke-width=".4"/>
<line x1="443.5" y1="332" x2="445.5" y2="332" stroke="#777" stroke-width=".4"/>
<line x1="443.5" y1="335" x2="445.5" y2="335" stroke="#777" stroke-width=".4"/>
<line x1="443.5" y1="338" x2="445.5" y2="338" stroke="#777" stroke-width=".4"/>
<line x1="443.5" y1="341" x2="445.5" y2="341" stroke="#777" stroke-width=".4"/>
<line x1="443.5" y1="344" x2="445.5" y2="344" stroke="#777" stroke-width=".4"/>
<path d="M416 318l4 3-4 3z" fill="#f0b0b0"/>
<text x="470" y="292" font-size="7" fill="#333" text-anchor="end" font-weight="normal">AC</text>
<text x="470" y="303.5" font-size="7" fill="#333" text-anchor="end" font-weight="normal">DC</text>
<rect x="472.5" y="283" width="11" height="24" fill="#c4c4c4" stroke="#5a5a5a"/>
<rect x="476.5" y="287" width="3" height="16" fill="#3a3a3a"/>
<rect x="474.0" y="284.5" width="8" height="8.5" fill="#dcdcdc" stroke="#777" stroke-width=".6"/>
<line x1="475.0" y1="286.5" x2="481.0" y2="286.5" stroke="#888" stroke-width=".5"/>
<line x1="475.0" y1="288.5" x2="481.0" y2="288.5" stroke="#888" stroke-width=".5"/>
<line x1="475.0" y1="290.5" x2="481.0" y2="290.5" stroke="#888" stroke-width=".5"/>
<rect x="472.5" y="316.5" width="11" height="25" fill="#c4c4c4" stroke="#5a5a5a"/>
<rect x="476.5" y="320.5" width="3" height="17" fill="#3a3a3a"/>
<rect x="474.0" y="318.0" width="8" height="8.5" fill="#dcdcdc" stroke="#777" stroke-width=".6"/>
<line x1="475.0" y1="320.0" x2="481.0" y2="320.0" stroke="#888" stroke-width=".5"/>
<line x1="475.0" y1="322.0" x2="481.0" y2="322.0" stroke="#888" stroke-width=".5"/>
<line x1="475.0" y1="324.0" x2="481.0" y2="324.0" stroke="#888" stroke-width=".5"/>
<path d="M466 321v5h-3v5h3v4" fill="none" stroke="#444" stroke-width=".8"/>
<text x="470" y="359" font-size="7" fill="#333" text-anchor="end" font-weight="normal">Auto</text>
<rect x="472.5" y="351" width="11" height="10.5" fill="#f4d0d8" stroke="#4a4a4a" stroke-width=".8"/>
<text x="470" y="370.5" font-size="7" fill="#333" text-anchor="end" font-weight="normal">One-Shot</text>
<rect x="472.5" y="362.5" width="11" height="11.5" fill="url(#btn)" stroke="#4a4a4a" stroke-width=".8"/>
<text x="470" y="382" font-size="7" fill="#333" text-anchor="end" font-weight="normal">Cursors</text>
<rect x="472.5" y="375" width="11" height="10.5" fill="url(#btn)" stroke="#4a4a4a" stroke-width=".8"/>
<text x="449" y="397.5" font-size="7" fill="#2a2a2a" text-anchor="middle" font-weight="normal">Source</text>
<text x="434" y="405" font-size="7" fill="#e8e040" text-anchor="middle" font-weight="bold">A</text>
<text x="445.4" y="405" font-size="7" fill="#4a9ae8" text-anchor="middle" font-weight="bold">B</text>
<text x="456" y="405" font-size="7" fill="#e070a0" text-anchor="middle" font-weight="bold">C</text>
<text x="466.5" y="405" font-size="7" fill="#40b080" text-anchor="middle" font-weight="bold">D</text>
<rect x="426.5" y="407.5" width="47" height="10.5" fill="#c8c8c8" stroke="#555" stroke-width=".8"/><line x1="435" y1="412.7" x2="471" y2="412.7" stroke="#111" stroke-width="1.5"/><rect x="428" y="409" width="7" height="7.5" fill="#e0e0e0" stroke="#777" stroke-width=".5"/>
<text x="447" y="432" font-size="9" fill="#f0903a" text-anchor="middle" font-weight="bold">Horizontal</text>
<text x="449" y="450" font-size="7" fill="#2a2a2a" text-anchor="middle" font-weight="normal">Source</text>
<text x="428.6" y="456" font-size="7" fill="#f09a40" text-anchor="middle" font-weight="bold">•</text>
<text x="438.4" y="456" font-size="7" fill="#e8e040" text-anchor="middle" font-weight="bold">A</text>
<text x="450.2" y="456" font-size="7" fill="#4a9ae8" text-anchor="middle" font-weight="bold">B</text>
<text x="461" y="456" font-size="7" fill="#e070a0" text-anchor="middle" font-weight="bold">C</text>
<text x="471.8" y="456" font-size="7" fill="#40b080" text-anchor="middle" font-weight="bold">D</text>
<rect x="421" y="459" width="58.5" height="11" fill="#c8c8c8" stroke="#555" stroke-width=".8"/><line x1="431" y1="464.5" x2="477" y2="464.5" stroke="#111" stroke-width="1.5"/><rect x="422.5" y="460.5" width="8" height="8" fill="#e0e0e0" stroke="#777" stroke-width=".5"/>
<text x="449" y="478.5" font-size="7" fill="#2a2a2a" text-anchor="middle" font-weight="normal">Position</text>
<rect x="420" y="481" width="60.5" height="28" fill="#9a9a9a" stroke="#5a5a5a"/><rect x="423.5" y="485" width="54" height="20" fill="url(#cylh)" stroke="#4a4a4a" stroke-width=".6"/>
<text x="432" y="497.5" font-size="7.5" fill="#1a1a1a" text-anchor="middle" font-weight="normal">210</text>
<text x="449" y="497.5" font-size="7.5" fill="#1a1a1a" text-anchor="middle" font-weight="normal">200</text>
<text x="466" y="497.5" font-size="7.5" fill="#1a1a1a" text-anchor="middle" font-weight="normal">190</text>
<path d="M445 481l4 4.5 4-4.5z" fill="#e02020"/><path d="M445 509l4-4.5 4 4.5z" fill="#e02020"/>
<path d="M417.8 577V544.5A32.349999999999994 32.349999999999994 0 0 1 482.5 544.5V577z" fill="#f8f8f8" stroke="#8a8a8a" stroke-width=".8"/>
<rect x="435.5" y="561.5" width="29" height="15.5" fill="#a8a8a8"/>
<text x="437.5" y="520.0" font-size="5.2" fill="#444" text-anchor="middle" font-weight="normal">1</text>
<text x="449" y="519.0" font-size="5.2" fill="#444" text-anchor="middle" font-weight="normal">0.5</text>
<text x="460.5" y="520.0" font-size="5.2" fill="#444" text-anchor="middle" font-weight="normal">0.2</text>
<text x="429.5" y="526.0" font-size="5.2" fill="#444" text-anchor="middle" font-weight="normal">2</text>
<text x="422.5" y="535.5" font-size="5.2" fill="#444" text-anchor="middle" font-weight="normal">5</text>
<text x="420.5" y="546.5" font-size="5.2" fill="#444" text-anchor="middle" font-weight="normal">20</text>
<text x="422.5" y="558.0" font-size="5.2" fill="#444" text-anchor="middle" font-weight="normal">100</text>
<text x="426.5" y="568.0" font-size="5.2" fill="#444" text-anchor="middle" font-weight="normal">200</text>
<text x="469.5" y="526.0" font-size="5.2" fill="#444" text-anchor="middle" font-weight="normal">50</text>
<text x="477.5" y="536.0" font-size="5.2" fill="#444" text-anchor="middle" font-weight="normal">20</text>
<text x="479.5" y="546.5" font-size="5.2" fill="#444" text-anchor="middle" font-weight="normal">10</text>
<text x="478.5" y="558.0" font-size="5.2" fill="#444" text-anchor="middle" font-weight="normal">5</text>
<text x="470.5" y="568.0" font-size="5.2" fill="#444" text-anchor="middle" font-weight="normal">2</text>
<circle cx="450" cy="544.5" r="21.5" fill="url(#knob)" stroke="#5a5a5a" stroke-width=".8"/>
<circle cx="450" cy="544.5" r="10.8" fill="url(#knobc)" stroke="#6a6a6a" stroke-width=".6"/>
<path d="M431 558l8-6 1 8z" fill="#f0903a"/><circle cx="458" cy="549" r="2" fill="#e8b040"/>
<rect x="437.5" y="567" width="27" height="10" fill="#fff" stroke="#555" stroke-width=".8"/>
<text x="439.5" y="575" font-size="7.5" fill="#222" text-anchor="start" font-weight="normal">0.2</text>
<text x="424" y="575" font-size="7" fill="#333" text-anchor="middle" font-weight="normal">ms</text>
<text x="473" y="575" font-size="7" fill="#333" text-anchor="middle" font-weight="normal">µs</text>
<path d="M480 312l0 14 3.5-3 2.5 5.5 2-1-2.5-5.5h4.5z" fill="#fff" stroke="#111" stroke-width=".8"/>
</svg>
<!--/SCOPE-->
<!--RIGHT-->
<!-- webcam -->
<svg class="a" style="left:1258px;top:42px" width="161" height="134" viewBox="1258 42 161 134">
<defs><filter id="bl" x="-10%" y="-10%" width="120%" height="120%"><feGaussianBlur stdDeviation="1.6"/></filter>
<linearGradient id="curt" x1="0" y1="0" x2="1" y2="0"><stop offset="0" stop-color="#c9cdd2"/><stop offset=".3" stop-color="#e4e7ea"/><stop offset=".55" stop-color="#c4c8cc"/><stop offset=".8" stop-color="#dfe2e5"/><stop offset="1" stop-color="#b8bcc0"/></linearGradient>
<radialGradient id="skin" cx=".5" cy=".45" r=".6"><stop offset="0" stop-color="#e2bcaa"/><stop offset=".7" stop-color="#c8a090"/><stop offset="1" stop-color="#a07868"/></radialGradient>
<radialGradient id="fur" cx=".5" cy=".5" r=".6"><stop offset="0" stop-color="#9a7a4a"/><stop offset="1" stop-color="#6a5030"/></radialGradient></defs>
<g filter="url(#bl)">
<rect x="1250" y="36" width="180" height="150" fill="#2a1a14"/>
<rect x="1250" y="36" width="52" height="150" fill="url(#curt)"/>
<rect x="1299" y="36" width="18" height="150" fill="#4e2a1c"/>
<rect x="1317" y="36" width="45" height="110" fill="#221610"/>
<rect x="1318" y="42" width="20" height="6" fill="#8a7030"/>
<rect x="1322" y="66" width="12" height="20" fill="#c8bcb0"/>
<rect x="1311" y="120" width="12" height="9" fill="#e8e8f0"/>
<rect x="1362" y="36" width="20" height="60" fill="#5a3222"/>
<rect x="1381" y="36" width="40" height="30" fill="#dadcd8"/>
<rect x="1386" y="66" width="34" height="8" fill="#6a3a28"/>
<rect x="1386" y="76" width="34" height="110" fill="#4a2c20"/>
<rect x="1394" y="95" width="25" height="40" fill="#38302c"/>
<path d="M1270 180 C1280 150 1300 140 1330 138 L1400 138 C1420 140 1425 160 1425 180z" fill="url(#fur)"/>
<path d="M1262 180 L1295 150 L1305 180z" fill="#2c3a32"/>
<path d="M1340 150 L1395 150 L1390 180 L1345 180z" fill="#2a2220"/>
<ellipse cx="1363" cy="127" rx="38" ry="54" fill="url(#skin)"/>
<path d="M1321 116 C1318 90 1322 60 1362 54 C1400 56 1408 84 1403 112 C1400 100 1398 92 1390 84 C1378 78 1350 76 1336 84 C1328 92 1326 104 1326 116z" fill="#1e1916"/>
<path d="M1332 109 q9-7 19-2M1374 106 q10-5 20 2" stroke="#2e2018" stroke-width="4.5" fill="none"/>
<rect x="1327" y="116" width="31" height="17" rx="5" fill="#c8ccd4" opacity=".35" stroke="#eceff0" stroke-width="2.2"/>
<rect x="1366" y="115" width="34" height="17" rx="5" fill="#c8ccd4" opacity=".35" stroke="#eceff0" stroke-width="2.2"/>
<line x1="1358" y1="121" x2="1366" y2="121" stroke="#e8e8e8" stroke-width="2"/>
<circle cx="1347" cy="124" r="3.5" fill="#4a5a6a"/><circle cx="1385" cy="123" r="3.5" fill="#3a3432"/>
<path d="M1360 132 q-4 12 2 18 q5 2 9 0" stroke="#a07060" stroke-width="2" fill="none"/>
<path d="M1350 160 q14-6 30 0" stroke="#5a4038" stroke-width="3.5" fill="none"/>
<ellipse cx="1366" cy="169" rx="12" ry="6" fill="#9a4a4a"/><rect x="1357" y="164.5" width="17" height="3.5" fill="#f0e8e0"/>
</g>
</svg>
<!-- chat panel -->
<div class="a" style="left:1178px;top:270px;width:197px;height:582px;background:#2e3035"></div>
<div class="a" style="left:1178px;top:270px;width:197px;height:17px;background:#36383d;border-bottom:1px solid #1c1d20"></div>
<svg class="a" style="left:1356px;top:274px" width="12" height="12" viewBox="0 0 12 12"><path d="M1.5 1.5l9 9M10.5 1.5l-9 9" stroke="#a8a8a8" stroke-width="1.2"/></svg>
<div class="a" style="left:1185px;top:295px;width:183px;height:77px;background:#222327;border-radius:2px"></div>
<div class="t" style="left:1228px;top:313px;font-size:12px;color:#e4e4e4">0</div>
<div class="t" style="left:1319px;top:313px;font-size:12px;color:#e4e4e4">9</div>
<div class="t" style="left:1217px;top:344px;font-size:10px;color:#8a8a8a">点赞数</div>
<div class="t" style="left:1303px;top:344px;font-size:10px;color:#8a8a8a">观看人数</div>
<div class="t" style="left:1188px;top:379px;font-size:11px;color:#dedede">消息</div>
<div class="a" style="left:1180px;top:398px;width:195px;height:1px;background:#404248"></div>
<div class="a" style="left:1190.5px;top:404.5px;width:19px;height:19px;border-radius:50%;background:#1a88f0"></div>
<div class="t" style="left:1193px;top:410px;font-size:7px;color:#fff">周扬</div>
<div class="t" style="left:1219px;top:407px;font-size:9.7px;color:#e0e0e0"><span style="color:#7a7c80">周扬:</span> 欢迎大家来观看直播 "0310-</div>
<div class="t" style="left:1219px;top:421px;font-size:9.7px;color:#e0e0e0">2" 。</div>
<div class="a" id="chat" style="left:1194px;top:438px;width:180px;white-space:nowrap;font-size:9.7px;line-height:13px;color:#e0a024">
<div style="height:32.4px">Chileshe:周扬, I'm watching your broadc<br>ast.</div>
<div style="height:32.4px">Mike Matanda :周扬, I'm watching your<br>broadcast.</div>
<div style="height:32.4px;letter-spacing:-.5px">Mireku 13：周扬，我来围观你的直播啦，<br>为你点赞！</div>
<div style="height:32.4px">Sagia05:周扬, I'm watching your broadc<br>ast.</div>
<div style="height:32.4px">Anthony 谢琨成:周扬, I'm watching your<br>broadcast.</div>
<div style="height:32.4px">Emmanuel Wezi Kam...:周扬, I'm watchin<br>g your broadcast.</div>
<div style="height:32.4px">Tarie <span style="color:#e86a8a">✿</span>:周扬, I'm watching your broadc<br>ast.</div>
<div style="height:32.4px">12ALLAN:周扬, I'm watching your broad<br>cast.</div>
</div>
<div class="a" style="left:1179px;top:654px;width:9px;height:24px;background:#222428"></div>
<svg class="a" style="left:1179px;top:654px" width="9" height="24" viewBox="0 0 9 24"><path d="M6 8l-3 4 3 4" stroke="#777" fill="none"/></svg>

<!--/RIGHT-->
</body></html>
